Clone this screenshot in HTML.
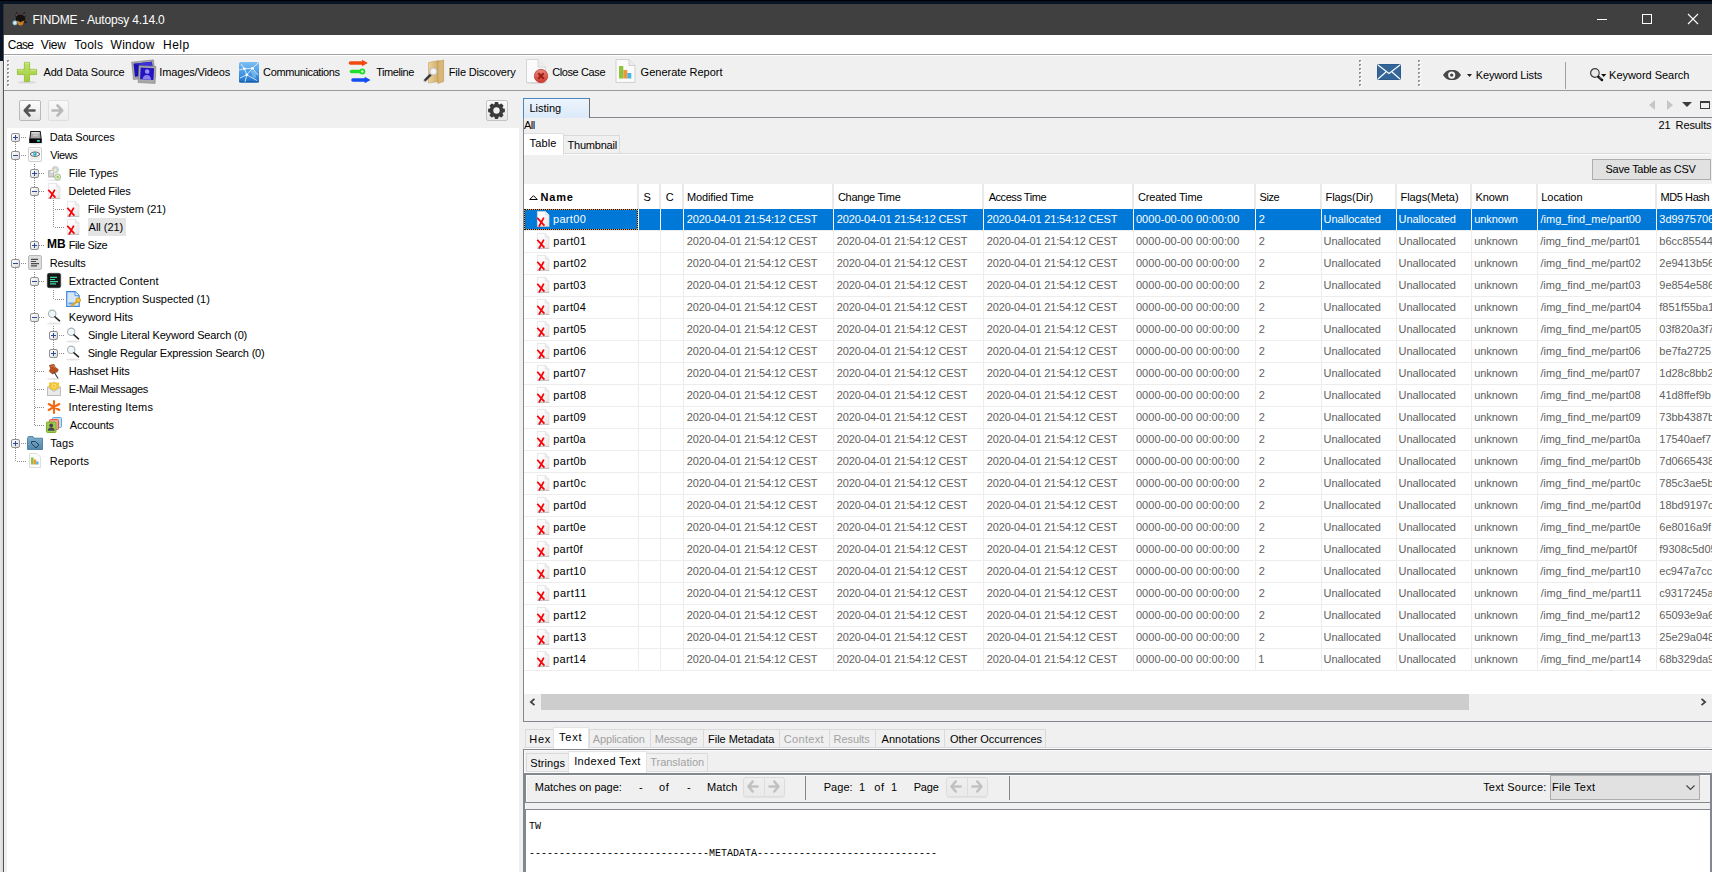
<!DOCTYPE html>
<html><head><meta charset="utf-8"><title>FINDME - Autopsy 4.14.0</title><style>
*{box-sizing:border-box;margin:0;padding:0}
html,body{width:1712px;height:872px;overflow:hidden;background:#f0f0f0}
body{position:relative;font-family:"Liberation Sans",sans-serif;font-size:11px;color:#000;line-height:14px;letter-spacing:-0.15px}
.a{position:absolute}
svg{position:absolute;overflow:visible}
.t{position:absolute;white-space:nowrap;height:14px;line-height:14px}
.g{color:#606060}
.w{color:#fff}
.d{color:#a2a2a2}
.m{font-family:"Liberation Mono",monospace;font-size:10px;letter-spacing:0}
.s{font-size:12px;letter-spacing:0}
.b{font-weight:bold}
</style></head><body>
<div class="a" style="left:0px;top:0px;width:1712px;height:4px;background:#091426"></div>
<div class="a" style="left:0px;top:0px;width:1712px;height:1px;background:#000"></div>
<div class="a" style="left:0px;top:4px;width:3px;height:57px;background:#091426"></div>
<div class="a" style="left:3px;top:4px;width:1px;height:31px;background:#2e2e2e"></div>
<div class="a" style="left:0px;top:61px;width:3px;height:811px;background:linear-gradient(90deg,#e8e8e8,#d8d8d8)"></div>
<div class="a" style="left:3px;top:35px;width:1px;height:837px;background:#555"></div>
<div class="a" style="left:4px;top:4px;width:1708px;height:31px;background:#404040"></div>
<svg style="left:12px;top:11px" width="16" height="15" viewBox="0 0 16 15"><path d="M3.300 6L4.500 .6 7 4.500z" fill="#1a1615"/><path d="M10 4.500L12.500 .6 13.700 6z" fill="#1a1615"/>
<path d="M4.300 4.800L4.800 2.300 5.900 4.300z" fill="#a87f80"/><path d="M11.100 4.300L12.200 2.300 12.700 4.800z" fill="#a87f80"/>
<ellipse cx="8.500" cy="7.800" rx="4.800" ry="4" fill="#14110f"/>
<path d="M4.800 9.500L8.500 11l3.700-1.500L11 13.500 8.500 14.700 6 13.500z" fill="#c97d22"/><path d="M7.300 9.300h2.400L8.500 11.500z" fill="#14110f"/>
<path d="M12.500 10l3 1.200-3 1z" fill="#14110f"/>
<circle cx="2.900" cy="11.900" r="2.100" fill="#c8edf5" stroke="#86b9c8" stroke-width=".7"/></svg>
<span class="t w s" style="left:32.45px;top:13px;letter-spacing:-0.17px;">FINDME - Autopsy 4.14.0</span>
<div class="a" style="left:1597px;top:19px;width:10px;height:1px;background:#fff"></div>
<div class="a" style="left:1642px;top:14px;width:10px;height:10px;border:1px solid #fff"></div>
<svg style="left:1688px;top:14px" width="10" height="10" viewBox="0 0 10 10"><path d="M0 0L10 10M10 0L0 10" stroke="#fff" stroke-width="1.1"/></svg>
<div class="a" style="left:4px;top:35px;width:1708px;height:19px;background:#fff"></div>
<div class="a" style="left:4px;top:54px;width:1708px;height:1px;background:#a0a0a0"></div>
<span class="t s" style="left:7.86px;top:38px;letter-spacing:-0.65px;">Case</span>
<span class="t s" style="left:40.83px;top:38px;letter-spacing:-0.21px;">View</span>
<span class="t s" style="left:74.16px;top:38px;letter-spacing:0.2px;">Tools</span>
<span class="t s" style="left:110.59px;top:38px;letter-spacing:0.23px;">Window</span>
<span class="t s" style="left:163.1px;top:38px;letter-spacing:0.47px;">Help</span>
<div class="a" style="left:4px;top:90px;width:1708px;height:1px;background:#9a9a9a"></div>
<div class="a" style="left:4px;top:55px;width:1708px;height:1px;background:#fff"></div>
<div class="a" style="left:4px;top:55px;width:1px;height:35px;background:#fff"></div>
<div class="a" style="left:8px;top:61px;width:2px;height:2px;background:#fff"></div>
<div class="a" style="left:7px;top:60px;width:2px;height:2px;background:#909090"></div>
<div class="a" style="left:8px;top:61px;width:1px;height:1px;background:#c4c4c4"></div>
<div class="a" style="left:8px;top:65px;width:2px;height:2px;background:#fff"></div>
<div class="a" style="left:7px;top:64px;width:2px;height:2px;background:#909090"></div>
<div class="a" style="left:8px;top:65px;width:1px;height:1px;background:#c4c4c4"></div>
<div class="a" style="left:8px;top:69px;width:2px;height:2px;background:#fff"></div>
<div class="a" style="left:7px;top:68px;width:2px;height:2px;background:#909090"></div>
<div class="a" style="left:8px;top:69px;width:1px;height:1px;background:#c4c4c4"></div>
<div class="a" style="left:8px;top:73px;width:2px;height:2px;background:#fff"></div>
<div class="a" style="left:7px;top:72px;width:2px;height:2px;background:#909090"></div>
<div class="a" style="left:8px;top:73px;width:1px;height:1px;background:#c4c4c4"></div>
<div class="a" style="left:8px;top:77px;width:2px;height:2px;background:#fff"></div>
<div class="a" style="left:7px;top:76px;width:2px;height:2px;background:#909090"></div>
<div class="a" style="left:8px;top:77px;width:1px;height:1px;background:#c4c4c4"></div>
<div class="a" style="left:8px;top:81px;width:2px;height:2px;background:#fff"></div>
<div class="a" style="left:7px;top:80px;width:2px;height:2px;background:#909090"></div>
<div class="a" style="left:8px;top:81px;width:1px;height:1px;background:#c4c4c4"></div>
<div class="a" style="left:8px;top:85px;width:2px;height:2px;background:#fff"></div>
<div class="a" style="left:7px;top:84px;width:2px;height:2px;background:#909090"></div>
<div class="a" style="left:8px;top:85px;width:1px;height:1px;background:#c4c4c4"></div>
<div class="a" style="left:1360px;top:61px;width:2px;height:2px;background:#fff"></div>
<div class="a" style="left:1359px;top:60px;width:2px;height:2px;background:#909090"></div>
<div class="a" style="left:1360px;top:61px;width:1px;height:1px;background:#c4c4c4"></div>
<div class="a" style="left:1360px;top:65px;width:2px;height:2px;background:#fff"></div>
<div class="a" style="left:1359px;top:64px;width:2px;height:2px;background:#909090"></div>
<div class="a" style="left:1360px;top:65px;width:1px;height:1px;background:#c4c4c4"></div>
<div class="a" style="left:1360px;top:69px;width:2px;height:2px;background:#fff"></div>
<div class="a" style="left:1359px;top:68px;width:2px;height:2px;background:#909090"></div>
<div class="a" style="left:1360px;top:69px;width:1px;height:1px;background:#c4c4c4"></div>
<div class="a" style="left:1360px;top:73px;width:2px;height:2px;background:#fff"></div>
<div class="a" style="left:1359px;top:72px;width:2px;height:2px;background:#909090"></div>
<div class="a" style="left:1360px;top:73px;width:1px;height:1px;background:#c4c4c4"></div>
<div class="a" style="left:1360px;top:77px;width:2px;height:2px;background:#fff"></div>
<div class="a" style="left:1359px;top:76px;width:2px;height:2px;background:#909090"></div>
<div class="a" style="left:1360px;top:77px;width:1px;height:1px;background:#c4c4c4"></div>
<div class="a" style="left:1360px;top:81px;width:2px;height:2px;background:#fff"></div>
<div class="a" style="left:1359px;top:80px;width:2px;height:2px;background:#909090"></div>
<div class="a" style="left:1360px;top:81px;width:1px;height:1px;background:#c4c4c4"></div>
<div class="a" style="left:1360px;top:85px;width:2px;height:2px;background:#fff"></div>
<div class="a" style="left:1359px;top:84px;width:2px;height:2px;background:#909090"></div>
<div class="a" style="left:1360px;top:85px;width:1px;height:1px;background:#c4c4c4"></div>
<div class="a" style="left:1419px;top:61px;width:2px;height:2px;background:#fff"></div>
<div class="a" style="left:1418px;top:60px;width:2px;height:2px;background:#909090"></div>
<div class="a" style="left:1419px;top:61px;width:1px;height:1px;background:#c4c4c4"></div>
<div class="a" style="left:1419px;top:65px;width:2px;height:2px;background:#fff"></div>
<div class="a" style="left:1418px;top:64px;width:2px;height:2px;background:#909090"></div>
<div class="a" style="left:1419px;top:65px;width:1px;height:1px;background:#c4c4c4"></div>
<div class="a" style="left:1419px;top:69px;width:2px;height:2px;background:#fff"></div>
<div class="a" style="left:1418px;top:68px;width:2px;height:2px;background:#909090"></div>
<div class="a" style="left:1419px;top:69px;width:1px;height:1px;background:#c4c4c4"></div>
<div class="a" style="left:1419px;top:73px;width:2px;height:2px;background:#fff"></div>
<div class="a" style="left:1418px;top:72px;width:2px;height:2px;background:#909090"></div>
<div class="a" style="left:1419px;top:73px;width:1px;height:1px;background:#c4c4c4"></div>
<div class="a" style="left:1419px;top:77px;width:2px;height:2px;background:#fff"></div>
<div class="a" style="left:1418px;top:76px;width:2px;height:2px;background:#909090"></div>
<div class="a" style="left:1419px;top:77px;width:1px;height:1px;background:#c4c4c4"></div>
<div class="a" style="left:1419px;top:81px;width:2px;height:2px;background:#fff"></div>
<div class="a" style="left:1418px;top:80px;width:2px;height:2px;background:#909090"></div>
<div class="a" style="left:1419px;top:81px;width:1px;height:1px;background:#c4c4c4"></div>
<div class="a" style="left:1419px;top:85px;width:2px;height:2px;background:#fff"></div>
<div class="a" style="left:1418px;top:84px;width:2px;height:2px;background:#909090"></div>
<div class="a" style="left:1419px;top:85px;width:1px;height:1px;background:#c4c4c4"></div>
<svg style="left:17px;top:62px" width="20" height="22" viewBox="0 0 20 22"><defs><linearGradient id="gp" x1="0" y1="0" x2="0" y2="1"><stop offset="0" stop-color="#c0e26c"/><stop offset="1" stop-color="#9fcb3c"/></linearGradient></defs>
<ellipse cx="10" cy="20.3" rx="9.5" ry="1.2" fill="#d8d8d8"/>
<path d="M7.400 .4h5.200v7h7v5.200h-7v7h-5.200v-7h-7v-5.200h7z" fill="url(#gp)" stroke="#8fbd30" stroke-width=".8"/><path d="M8 1.200h4M1.200 8.200h5M14 8.200h5" stroke="#d4ec98" stroke-width=".9"/></svg>
<svg style="left:132px;top:60px" width="24" height="24" viewBox="0 0 24 24"><g transform="rotate(-6 11 10)"><rect x=".5" y="1" width="22" height="17.500" fill="#a4a4a4" stroke="#7c7c7c" stroke-width=".5"/><rect x="2.300" y="2.800" width="18.400" height="13" fill="#1a10b4"/><path d="M2.300 2.800L20.700 8V2.800z" fill="#3a30d8"/></g>
<g transform="rotate(3 15 15)"><rect x="6.500" y="6" width="17" height="17" fill="#a9a9a9" stroke="#777" stroke-width=".5"/><rect x="8.300" y="7.800" width="13.400" height="11.800" fill="#2214c4"/>
<circle cx="15" cy="11.500" r="2.300" fill="#9a90ee"/><path d="M10.800 19.600c0-3.200 2-4.600 4.200-4.600s4.200 1.400 4.200 4.600z" fill="#8a80e6"/></g></svg>
<svg style="left:239px;top:62px" width="20" height="21" viewBox="0 0 20 21"><defs><linearGradient id="gc" x1="0" y1="0" x2="0" y2="1"><stop offset="0" stop-color="#7dbff3"/><stop offset=".5" stop-color="#4a9be6"/><stop offset="1" stop-color="#1f72cb"/></linearGradient></defs>
<rect x="0" y="0" width="20" height="20.500" rx="2" fill="url(#gc)"/><rect x="0" y="19" width="20" height="1.500" rx=".7" fill="#1a5ea8"/>
<path d="M12 9c2-1 4 0 5 2s0 4-1 5-3-1-3-3-2-3-1-4z" fill="#8cc4f2" opacity=".6"/>
<path d="M2 2L5.400 6.700 7.800 12.800 6 20M5.400 6.700L13.500 6.300 19 1M7.800 12.800L13.500 6.300 19 13M7.800 12.800L18 18.500M7.800 12.800L1 16M5.400 6.700L0 8" fill="none" stroke="#eaf4fd" stroke-width=".9" opacity=".9"/>
<circle cx="5.400" cy="6.700" r="1.300" fill="#fff"/><circle cx="13.500" cy="6.300" r="1.300" fill="#fff"/><circle cx="7.800" cy="12.800" r="1.400" fill="#fff"/></svg>
<svg style="left:348px;top:60px" width="23" height="23" viewBox="0 0 23 23"><g stroke-width="3.600" stroke-linecap="round" fill="none"><path d="M2.500 3H15" stroke="#f2490f"/><path d="M3.500 11.500H12" stroke="#1fe12a"/><path d="M5 20H17.500" stroke="#124cf2"/></g>
<path d="M14 -.3L19.800 3 14 6.300z" fill="#f2490f"/><path d="M16.700 16.700L22.600 20 16.700 23.300z" fill="#124cf2"/>
<circle cx="14.300" cy="11.500" r="2.100" fill="#eafbe9" stroke="#1fe12a" stroke-width="1.900"/></svg>
<svg style="left:423px;top:59px" width="22" height="25" viewBox="0 0 22 25"><defs><linearGradient id="gf" x1="0" y1="0" x2="1" y2="0"><stop offset="0" stop-color="#ecd49c"/><stop offset="1" stop-color="#cfa962"/></linearGradient></defs>
<path d="M5.500 3.500L16 1.500V22.500L5.500 24z" fill="url(#gf)" stroke="#b8955a" stroke-width=".5"/>
<path d="M14.800 2.500L20.600 1V22.500L14.800 24.500z" fill="#d9b673" stroke="#b08a4c" stroke-width=".5"/>
<path d="M8.500 15L2 21.500" stroke="#9a9a9a" stroke-width="3.400" stroke-linecap="round" opacity=".5"/><path d="M8.300 15L2.300 21" stroke="#333" stroke-width="2.200" stroke-linecap="round"/>
<circle cx="10.400" cy="12.500" r="3.500" fill="#f3f3f3" stroke="#bdbdbd" stroke-width="1.100"/></svg>
<svg style="left:525px;top:59px" width="24" height="25" viewBox="0 0 24 25"><defs><linearGradient id="gr" x1="0" y1="0" x2="0" y2="1"><stop offset="0" stop-color="#ea8a80"/><stop offset="1" stop-color="#d1392d"/></linearGradient></defs>
<ellipse cx="11" cy="24" rx="10.500" ry=".9" fill="#dcdcdc"/>
<path d="M1.500 .5h11.500l7.500 7.500V23.500H1.500z" fill="#fbfbfb" stroke="#cfcfcf" stroke-width=".8"/><path d="M13 .5v7.500h7.500" fill="#ededed" stroke="#cfcfcf" stroke-width=".8"/>
<circle cx="16" cy="17" r="6.700" fill="url(#gr)" stroke="#b8352b" stroke-width=".7"/><path d="M13.300 14.300l5.400 5.400M18.700 14.300l-5.400 5.400" stroke="#9c1d15" stroke-width="2"/></svg>
<svg style="left:615px;top:59px" width="21" height="25" viewBox="0 0 21 25"><path d="M1 .5h13l6 6V23.500H1z" fill="#fafafa" stroke="#c8c8c8" stroke-width=".8"/><path d="M14 .5v6h6" fill="#ececec" stroke="#c8c8c8" stroke-width=".8"/>
<rect x="4" y="7" width="4.300" height="12.500" fill="#8cc63f"/><rect x="8.300" y="11" width="4" height="8.500" fill="#f0973a"/><rect x="12.300" y="14" width="4" height="5.500" fill="#4ab4e6"/></svg>
<span class="t " style="left:43.55px;top:65px;letter-spacing:-0.19px;">Add Data Source</span>
<span class="t " style="left:159.21px;top:65px;letter-spacing:-0.13px;">Images/Videos</span>
<span class="t " style="left:263.11px;top:65px;letter-spacing:-0.38px;">Communications</span>
<span class="t " style="left:376.16px;top:65px;letter-spacing:-0.43px;">Timeline</span>
<span class="t " style="left:448.81px;top:65px;letter-spacing:-0.17px;">File Discovery</span>
<span class="t " style="left:552.14px;top:65px;letter-spacing:-0.38px;">Close Case</span>
<span class="t " style="left:640.61px;top:65px;letter-spacing:0px;">Generate Report</span>
<svg style="left:1377px;top:64px" width="24" height="16" viewBox="0 0 24 16"><rect x=".5" y=".5" width="23" height="15" rx="1" fill="#336699" stroke="#2b5b8c"/><path d="M1 1l11 8.500L23 1M1 15l8-7M23 15l-8-7" fill="none" stroke="#fff" stroke-width="1.100"/></svg>
<svg style="left:1443px;top:70px" width="18" height="10" viewBox="0 0 18 10"><path d="M0 5C3 .3 6 0 9 0s6 .3 9 5c-3 4.700-6 5-9 5s-6-.3-9-5z" fill="#484848"/><circle cx="8.700" cy="5.100" r="3.600" fill="#f4f4f4"/><circle cx="8.700" cy="5.100" r="1.700" fill="#484848"/></svg>
<svg style="left:1467px;top:74px" width="5" height="3" viewBox="0 0 5 3"><path d="M0 0h5L2.500 3z" fill="#222"/></svg>
<span class="t " style="left:1475.86px;top:68px;letter-spacing:-0.17px;">Keyword Lists</span>
<div class="a" style="left:1565px;top:62px;width:1px;height:27px;background:#a0a0a0"></div>
<svg style="left:1590px;top:68px" width="17" height="14" viewBox="0 0 17 14"><circle cx="4.900" cy="5" r="4.300" fill="#e9e9e9" stroke="#3e3e3e" stroke-width="1.200"/><path d="M8.400 8.900L12 12" stroke="#111" stroke-width="2.500" stroke-linecap="round"/><path d="M9.200 10.300l1.600-1.600M10.300 11.300l1.600-1.600" stroke="#eee" stroke-width=".5"/><path d="M11.100 5.900h5.200l-2.600 3.100z" fill="#111"/></svg>
<span class="t " style="left:1609.1px;top:68px;letter-spacing:-0.03px;">Keyword Search</span>
<div class="a" style="left:19px;top:100px;width:22px;height:21px;border:1px solid #b9b9b9;border-radius:2px;background:linear-gradient(#fdfdfd,#e4e4e4)"></div>
<div class="a" style="left:48px;top:100px;width:21px;height:21px;border:1px solid #dedede;border-radius:2px;background:linear-gradient(#f9f9f9,#ededed)"></div>
<svg style="left:23px;top:104px" width="14" height="13" viewBox="0 0 14 13"><path d="M6.500 1.500L1.800 6.500 6.500 11.500M2.500 6.500H11.500" fill="none" stroke="#565656" stroke-width="2.600" stroke-linecap="round" stroke-linejoin="round"/></svg>
<svg style="left:51px;top:104px" width="14" height="13" viewBox="0 0 14 13"><path d="M6.500 1.500L11.200 6.500 6.500 11.500M10.500 6.500H1.500" fill="none" stroke="#b9b9b9" stroke-width="2.600" stroke-linecap="round" stroke-linejoin="round"/></svg>
<div class="a" style="left:486px;top:100px;width:22px;height:21px;border:1px solid #c4c4c4;border-radius:2px;background:linear-gradient(#fbfbfb,#e6e6e6)"></div>
<svg style="left:488px;top:102px" width="17" height="17" viewBox="0 0 17 17"><g transform="translate(8.500 8.500)"><rect x="-1.900" y="-8.400" width="3.800" height="4.500" rx=".8" fill="#3a3a3a" transform="rotate(0)"/><rect x="-1.900" y="-8.400" width="3.800" height="4.500" rx=".8" fill="#3a3a3a" transform="rotate(45)"/><rect x="-1.900" y="-8.400" width="3.800" height="4.500" rx=".8" fill="#3a3a3a" transform="rotate(90)"/><rect x="-1.900" y="-8.400" width="3.800" height="4.500" rx=".8" fill="#3a3a3a" transform="rotate(135)"/><rect x="-1.900" y="-8.400" width="3.800" height="4.500" rx=".8" fill="#3a3a3a" transform="rotate(180)"/><rect x="-1.900" y="-8.400" width="3.800" height="4.500" rx=".8" fill="#3a3a3a" transform="rotate(225)"/><rect x="-1.900" y="-8.400" width="3.800" height="4.500" rx=".8" fill="#3a3a3a" transform="rotate(270)"/><rect x="-1.900" y="-8.400" width="3.800" height="4.500" rx=".8" fill="#3a3a3a" transform="rotate(315)"/><circle r="5" fill="none" stroke="#3a3a3a" stroke-width="3.600"/></g></svg>
<div class="a" style="left:7px;top:128px;width:512px;height:744px;background:#fff"></div>
<svg width="0" height="0" style="left:0;top:0"><defs><linearGradient id="gd" x1="0" y1="0" x2="1" y2="1"><stop offset=".3" stop-color="#fdfdfd"/><stop offset="1" stop-color="#e4e4e4"/></linearGradient></defs></svg>
<div class="a" style="left:15px;top:142px;width:1px;height:319px;background:repeating-linear-gradient(#8c8c8c 0 1px,transparent 1px 2px)"></div>
<div class="a" style="left:17px;top:461px;width:9px;height:1px;background:repeating-linear-gradient(90deg,#8c8c8c 0 1px,transparent 1px 2px)"></div>
<div class="a" style="left:34px;top:164px;width:1px;height:77px;background:repeating-linear-gradient(#8c8c8c 0 1px,transparent 1px 2px)"></div>
<div class="a" style="left:34px;top:272px;width:1px;height:153px;background:repeating-linear-gradient(#8c8c8c 0 1px,transparent 1px 2px)"></div>
<div class="a" style="left:35px;top:371px;width:9px;height:1px;background:repeating-linear-gradient(90deg,#8c8c8c 0 1px,transparent 1px 2px)"></div>
<div class="a" style="left:35px;top:389px;width:9px;height:1px;background:repeating-linear-gradient(90deg,#8c8c8c 0 1px,transparent 1px 2px)"></div>
<div class="a" style="left:35px;top:407px;width:9px;height:1px;background:repeating-linear-gradient(90deg,#8c8c8c 0 1px,transparent 1px 2px)"></div>
<div class="a" style="left:35px;top:425px;width:9px;height:1px;background:repeating-linear-gradient(90deg,#8c8c8c 0 1px,transparent 1px 2px)"></div>
<div class="a" style="left:53px;top:200px;width:1px;height:27px;background:repeating-linear-gradient(#8c8c8c 0 1px,transparent 1px 2px)"></div>
<div class="a" style="left:55px;top:209px;width:9px;height:1px;background:repeating-linear-gradient(90deg,#8c8c8c 0 1px,transparent 1px 2px)"></div>
<div class="a" style="left:55px;top:227px;width:9px;height:1px;background:repeating-linear-gradient(90deg,#8c8c8c 0 1px,transparent 1px 2px)"></div>
<div class="a" style="left:53px;top:290px;width:1px;height:9px;background:repeating-linear-gradient(#8c8c8c 0 1px,transparent 1px 2px)"></div>
<div class="a" style="left:55px;top:299px;width:9px;height:1px;background:repeating-linear-gradient(90deg,#8c8c8c 0 1px,transparent 1px 2px)"></div>
<div class="a" style="left:53px;top:326px;width:1px;height:27px;background:repeating-linear-gradient(#8c8c8c 0 1px,transparent 1px 2px)"></div>
<div class="a" style="left:21px;top:137px;width:5px;height:1px;background:repeating-linear-gradient(90deg,#8c8c8c 0 1px,transparent 1px 2px)"></div>
<div class="a" style="left:11px;top:133px;width:9px;height:9px;border:1px solid #919191;border-radius:2px;background:linear-gradient(135deg,#fff,#dcdcdc)"></div>
<div class="a" style="left:13px;top:137px;width:5px;height:1px;background:#2c4a9a"></div>
<div class="a" style="left:15px;top:135px;width:1px;height:5px;background:#2c4a9a"></div>
<svg style="left:29px;top:131px" width="13" height="13" viewBox="0 0 13 13"><ellipse cx="6.500" cy="12.700" rx="7.200" ry=".8" fill="#e0e0e0"/><path d="M1.300 0h10.400l1 8H.3z" fill="#1d1d1d"/><path d="M2.200 1h8.600l.8 6.500H1.400z" fill="#a6a6a6"/><rect x="2.600" y="1.200" width="7.800" height="1.300" fill="#e9e9e9"/><rect x="3.800" y="3.600" width="5.400" height="1.600" rx=".5" fill="#c9c9c9"/><rect x=".2" y="7.800" width="12.600" height="4.200" rx=".5" fill="#050505"/><rect x="7.800" y="9" width="3.200" height="1.700" rx=".8" fill="#2fd0d6"/></svg>
<span class="t " style="left:49.67px;top:130px;letter-spacing:-0.15px;">Data Sources</span>
<div class="a" style="left:21px;top:155px;width:5px;height:1px;background:repeating-linear-gradient(90deg,#8c8c8c 0 1px,transparent 1px 2px)"></div>
<div class="a" style="left:11px;top:151px;width:9px;height:9px;border:1px solid #919191;border-radius:2px;background:linear-gradient(135deg,#fff,#dcdcdc)"></div>
<div class="a" style="left:13px;top:155px;width:5px;height:1px;background:#2c4a9a"></div>
<svg style="left:28px;top:147px" width="14" height="15" viewBox="0 0 14 15"><rect x=".5" y=".5" width="13" height="14" rx="1.500" fill="#fdfdfd" stroke="#cdcdcd"/><rect x="2.200" y="2.200" width="9.600" height="10.600" fill="#ececec"/><path d="M2 7.200C4.300 4.300 9.700 4.300 12 7.200 9.700 10.100 4.300 10.100 2 7.200z" fill="#f4f4f4" stroke="#4a4a4a" stroke-width=".9"/><circle cx="6.900" cy="7" r="1.800" fill="#1fa6cf"/><circle cx="6.600" cy="6.600" r=".6" fill="#9fe3f5"/></svg>
<span class="t " style="left:50.34px;top:148px;letter-spacing:-0.44px;">Views</span>
<div class="a" style="left:39px;top:173px;width:5px;height:1px;background:repeating-linear-gradient(90deg,#8c8c8c 0 1px,transparent 1px 2px)"></div>
<div class="a" style="left:30px;top:169px;width:9px;height:9px;border:1px solid #919191;border-radius:2px;background:linear-gradient(135deg,#fff,#dcdcdc)"></div>
<div class="a" style="left:32px;top:173px;width:5px;height:1px;background:#2c4a9a"></div>
<div class="a" style="left:34px;top:171px;width:1px;height:5px;background:#2c4a9a"></div>
<svg style="left:48px;top:165.6px" width="14" height="15" viewBox="0 0 14 15"><ellipse cx="6.500" cy="14.200" rx="7.800" ry=".8" fill="#e6e6e6"/><circle cx="7.300" cy="3.700" r="3.200" fill="#f0ecf4" stroke="#c2c2c8" stroke-width=".9"/><path d="M7.300 .9a2.800 2.800 0 0 1 2.800 2.800h-1.600a1.200 1.200 0 0 0-1.200-1.200z" fill="#a9e0e4"/><path d="M4.500 3.700a2.800 2.800 0 0 1 2.800-2.800v1.600a1.200 1.200 0 0 0-1.200 1.200z" fill="#f0c4a8"/><path d="M10.100 3.700a2.800 2.800 0 0 1-2.800 2.800v-1.600a1.200 1.200 0 0 0 1.200-1.200z" fill="#bfe6a0"/><rect x=".7" y="4.600" width="5" height="6.400" fill="#d2d2d2" stroke="#a9a9a9" stroke-width=".8"/><rect x="2.700" y="4.600" width="3" height="2" fill="#f2f2f2"/><circle cx="9.600" cy="11" r="3.100" fill="#d2efb0" stroke="#b3b3b3" stroke-width=".9"/><circle cx="9.600" cy="11" r="1" fill="#8fbf50"/></svg>
<span class="t " style="left:68.67px;top:166px;letter-spacing:-0.06px;">File Types</span>
<div class="a" style="left:39px;top:191px;width:5px;height:1px;background:repeating-linear-gradient(90deg,#8c8c8c 0 1px,transparent 1px 2px)"></div>
<div class="a" style="left:30px;top:187px;width:9px;height:9px;border:1px solid #919191;border-radius:2px;background:linear-gradient(135deg,#fff,#dcdcdc)"></div>
<div class="a" style="left:32px;top:191px;width:5px;height:1px;background:#2c4a9a"></div>
<svg style="left:48px;top:183px" width="13" height="16" viewBox="0 0 13 16"><path d="M.4 .4h8l3.600 3.600V15.500H.4z" fill="url(#gd)" stroke="#dcdcdc" stroke-width=".7"/><path d="M8.400 .4v3.600H12" fill="#f1f1f1" stroke="#d6d6d6" stroke-width=".6"/><path d="M.2 15.400H12.200" stroke="#b9b9b9" stroke-width=".9"/><path d="M.3 6.900L7.400 14.600M6.800 6.600L2 15.500" stroke="#fb0007" stroke-width="1.700" fill="none"/></svg>
<span class="t " style="left:68.62px;top:184px;letter-spacing:-0.17px;">Deleted Files</span>
<svg style="left:67px;top:201px" width="13" height="16" viewBox="0 0 13 16"><path d="M.4 .4h8l3.600 3.600V15.500H.4z" fill="url(#gd)" stroke="#dcdcdc" stroke-width=".7"/><path d="M8.400 .4v3.600H12" fill="#f1f1f1" stroke="#d6d6d6" stroke-width=".6"/><path d="M.2 15.400H12.200" stroke="#b9b9b9" stroke-width=".9"/><path d="M.3 6.900L7.400 14.600M6.800 6.600L2 15.500" stroke="#fb0007" stroke-width="1.700" fill="none"/></svg>
<span class="t " style="left:87.7px;top:202px;letter-spacing:-0.12px;">File System (21)</span>
<div class="a" style="left:88px;top:218px;width:38px;height:18px;background:#e4e4e4"></div>
<svg style="left:67px;top:219px" width="13" height="16" viewBox="0 0 13 16"><path d="M.4 .4h8l3.600 3.600V15.500H.4z" fill="url(#gd)" stroke="#dcdcdc" stroke-width=".7"/><path d="M8.400 .4v3.600H12" fill="#f1f1f1" stroke="#d6d6d6" stroke-width=".6"/><path d="M.2 15.400H12.200" stroke="#b9b9b9" stroke-width=".9"/><path d="M.3 6.900L7.400 14.600M6.800 6.600L2 15.500" stroke="#fb0007" stroke-width="1.700" fill="none"/></svg>
<span class="t " style="left:88.57px;top:220px;letter-spacing:-0.02px;">All (21)</span>
<div class="a" style="left:39px;top:245px;width:5px;height:1px;background:repeating-linear-gradient(90deg,#8c8c8c 0 1px,transparent 1px 2px)"></div>
<div class="a" style="left:30px;top:241px;width:9px;height:9px;border:1px solid #919191;border-radius:2px;background:linear-gradient(135deg,#fff,#dcdcdc)"></div>
<div class="a" style="left:32px;top:245px;width:5px;height:1px;background:#2c4a9a"></div>
<div class="a" style="left:34px;top:243px;width:1px;height:5px;background:#2c4a9a"></div>
<span class="t " style="left:47px;top:237px;font-weight:bold;font-size:12px;letter-spacing:0">MB</span>
<span class="t " style="left:68.67px;top:238px;letter-spacing:-0.39px;">File Size</span>
<div class="a" style="left:21px;top:263px;width:5px;height:1px;background:repeating-linear-gradient(90deg,#8c8c8c 0 1px,transparent 1px 2px)"></div>
<div class="a" style="left:11px;top:259px;width:9px;height:9px;border:1px solid #919191;border-radius:2px;background:linear-gradient(135deg,#fff,#dcdcdc)"></div>
<div class="a" style="left:13px;top:263px;width:5px;height:1px;background:#2c4a9a"></div>
<svg style="left:28px;top:255px" width="14" height="15" viewBox="0 0 14 15"><rect x=".5" y=".5" width="13" height="14" rx="1.500" fill="#dedede" stroke="#b9b9b9"/><path d="M3 4.300h7M3 6.500h5M3 8.700h8M3 10.900h6" stroke="#4b4b4b" stroke-width="1.200"/></svg>
<span class="t " style="left:49.67px;top:256px;letter-spacing:-0.11px;">Results</span>
<div class="a" style="left:39px;top:281px;width:5px;height:1px;background:repeating-linear-gradient(90deg,#8c8c8c 0 1px,transparent 1px 2px)"></div>
<div class="a" style="left:30px;top:277px;width:9px;height:9px;border:1px solid #919191;border-radius:2px;background:linear-gradient(135deg,#fff,#dcdcdc)"></div>
<div class="a" style="left:32px;top:281px;width:5px;height:1px;background:#2c4a9a"></div>
<svg style="left:47px;top:273px" width="14" height="15" viewBox="0 0 14 15"><rect x=".3" y=".3" width="13.400" height="14.400" rx="1.800" fill="#161616" stroke="#3a3a3a" stroke-width=".6"/><path d="M3 4.300h7M3 6.500h5M3 8.700h8M3 10.900h6" stroke="#3fd6a0" stroke-width="1.200"/></svg>
<span class="t " style="left:68.67px;top:274px;letter-spacing:0.11px;">Extracted Content</span>
<svg style="left:66px;top:291px" width="15" height="16" viewBox="0 0 15 16"><path d="M.7 .7h8.500l4 4V15.300H.7z" fill="#d4e6fa" stroke="#3f87d9" stroke-width="1.200"/><path d="M9 .7v4h4" fill="#eaf3fd" stroke="#3f87d9" stroke-width=".9"/><rect x="2.500" y="11.500" width="6" height="2" fill="#5fa3e6"/><path d="M6 14.500L11 10.500" stroke="#e0a520" stroke-width="2.200" stroke-linecap="round"/><circle cx="12.200" cy="9.200" r="2.300" fill="#f2c445" stroke="#c98f12" stroke-width=".8"/></svg>
<span class="t " style="left:87.7px;top:292px;letter-spacing:-0.06px;">Encryption Suspected (1)</span>
<div class="a" style="left:39px;top:317px;width:5px;height:1px;background:repeating-linear-gradient(90deg,#8c8c8c 0 1px,transparent 1px 2px)"></div>
<div class="a" style="left:30px;top:313px;width:9px;height:9px;border:1px solid #919191;border-radius:2px;background:linear-gradient(135deg,#fff,#dcdcdc)"></div>
<div class="a" style="left:32px;top:317px;width:5px;height:1px;background:#2c4a9a"></div>
<svg style="left:47.3px;top:309.3px" width="14" height="16" viewBox="0 0 14 16"><ellipse cx="7" cy="14.500" rx="7" ry="1" fill="#e4e4e4"/><circle cx="5.200" cy="4.800" r="3.700" fill="#eef7fa" stroke="#a9b3b6" stroke-width="1.100"/><path d="M8 7.800L12.500 11.800" stroke="#2b2b2b" stroke-width="1.600" stroke-linecap="round"/></svg>
<span class="t " style="left:68.67px;top:310px;letter-spacing:-0.05px;">Keyword Hits</span>
<div class="a" style="left:59px;top:335px;width:5px;height:1px;background:repeating-linear-gradient(90deg,#8c8c8c 0 1px,transparent 1px 2px)"></div>
<div class="a" style="left:49px;top:331px;width:9px;height:9px;border:1px solid #919191;border-radius:2px;background:linear-gradient(135deg,#fff,#dcdcdc)"></div>
<div class="a" style="left:51px;top:335px;width:5px;height:1px;background:#2c4a9a"></div>
<div class="a" style="left:53px;top:333px;width:1px;height:5px;background:#2c4a9a"></div>
<svg style="left:66.3px;top:327.3px" width="14" height="16" viewBox="0 0 14 16"><ellipse cx="7" cy="14.500" rx="7" ry="1" fill="#e4e4e4"/><circle cx="5.200" cy="4.800" r="3.700" fill="#eef7fa" stroke="#a9b3b6" stroke-width="1.100"/><path d="M8 7.800L12.500 11.800" stroke="#2b2b2b" stroke-width="1.600" stroke-linecap="round"/></svg>
<span class="t " style="left:87.9px;top:328px;letter-spacing:-0.14px;">Single Literal Keyword Search (0)</span>
<div class="a" style="left:59px;top:353px;width:5px;height:1px;background:repeating-linear-gradient(90deg,#8c8c8c 0 1px,transparent 1px 2px)"></div>
<div class="a" style="left:49px;top:349px;width:9px;height:9px;border:1px solid #919191;border-radius:2px;background:linear-gradient(135deg,#fff,#dcdcdc)"></div>
<div class="a" style="left:51px;top:353px;width:5px;height:1px;background:#2c4a9a"></div>
<div class="a" style="left:53px;top:351px;width:1px;height:5px;background:#2c4a9a"></div>
<svg style="left:66.3px;top:345.3px" width="14" height="16" viewBox="0 0 14 16"><ellipse cx="7" cy="14.500" rx="7" ry="1" fill="#e4e4e4"/><circle cx="5.200" cy="4.800" r="3.700" fill="#eef7fa" stroke="#a9b3b6" stroke-width="1.100"/><path d="M8 7.800L12.500 11.800" stroke="#2b2b2b" stroke-width="1.600" stroke-linecap="round"/></svg>
<span class="t " style="left:87.66px;top:346px;letter-spacing:-0.2px;">Single Regular Expression Search (0)</span>
<svg style="left:46.5px;top:363.5px" width="14" height="16" viewBox="0 0 14 16"><ellipse cx="6.500" cy="14.800" rx="7" ry=".9" fill="#e4e4e4"/><path d="M2.500 1.300L7 .3l1.300 3 3 2.200-1 2.300-5 2.200-3-2.800 1.200-2.700z" fill="#b5511f" stroke="#8a3a12" stroke-width=".6"/><path d="M4 2.500l3-.8 .8 2.300" fill="none" stroke="#d98a5a" stroke-width=".8"/><path d="M7.500 8.800L10.800 14" stroke="#3a3a3a" stroke-width="1.100" stroke-linecap="round"/></svg>
<span class="t " style="left:68.67px;top:364px;letter-spacing:-0.12px;">Hashset Hits</span>
<svg style="left:47px;top:381px" width="14" height="15" viewBox="0 0 14 15"><path d="M.5 6L7 .8 13.500 6V14.500H.5z" fill="#ededed" stroke="#bdbdbd" stroke-width=".8"/><rect x="2" y="1.500" width="10" height="8" fill="#f4c531"/><circle cx="7" cy="5" r="2" fill="none" stroke="#f9e08a" stroke-width="1"/><path d="M.5 6L7 10.500 13.500 6V14.500H.5z" fill="#e9e9e9" stroke="#b5b5b5" stroke-width=".8"/></svg>
<span class="t " style="left:68.67px;top:382px;letter-spacing:-0.34px;">E-Mail Messages</span>
<svg style="left:47.2px;top:399.8px" width="14" height="14" viewBox="0 0 14 14"><path d="M7 1V13M1.700 4L12.300 10M12.300 4L1.700 10" stroke="#f26a16" stroke-width="2.100" stroke-linecap="round"/></svg>
<span class="t " style="left:68.42px;top:400px;letter-spacing:0.2px;">Interesting Items</span>
<svg style="left:46px;top:417px" width="16" height="16" viewBox="0 0 16 16"><rect x="6.500" y=".5" width="9" height="10" rx="1" fill="#bfe1f6" stroke="#5ea8d8"/><rect x="3.500" y="2.500" width="9" height="10" rx="1" fill="#f8a090" stroke="#e2523e"/><rect x=".5" y="5" width="9.500" height="10.500" rx="1" fill="#9ccb4a" stroke="#7fae30"/><circle cx="5.200" cy="8.500" r="1.900" fill="#4a4458"/><path d="M1.800 13.800c0-2.600 1.500-3.300 3.400-3.300s3.400 .7 3.400 3.300z" fill="#4a4458"/></svg>
<span class="t " style="left:69.72px;top:418px;letter-spacing:-0.12px;">Accounts</span>
<div class="a" style="left:21px;top:443px;width:5px;height:1px;background:repeating-linear-gradient(90deg,#8c8c8c 0 1px,transparent 1px 2px)"></div>
<div class="a" style="left:11px;top:439px;width:9px;height:9px;border:1px solid #919191;border-radius:2px;background:linear-gradient(135deg,#fff,#dcdcdc)"></div>
<div class="a" style="left:13px;top:443px;width:5px;height:1px;background:#2c4a9a"></div>
<div class="a" style="left:15px;top:441px;width:1px;height:5px;background:#2c4a9a"></div>
<svg style="left:27px;top:436px" width="16" height="14" viewBox="0 0 16 14"><defs><linearGradient id="gt" x1="0" y1="0" x2="0" y2="1"><stop offset="0" stop-color="#7fb0cf"/><stop offset="1" stop-color="#4f86ad"/></linearGradient></defs><path d="M.5 2.200l1-1.700h4.500l1 1.700h8.500V13.500H.5z" fill="url(#gt)" stroke="#3f7096" stroke-width=".8"/><path d="M4.500 5.500h4l3.500 3.500-3 3-4.500-4.500z" fill="none" stroke="#2c3e50" stroke-width="1"/></svg>
<span class="t " style="left:50.16px;top:436px;letter-spacing:0.12px;">Tags</span>
<svg style="left:29px;top:453px" width="12" height="15" viewBox="0 0 12 15"><path d="M.5 .5h7.500l3.500 3.500V14.500H.5z" fill="#fbfbfb" stroke="#d6d6d6" stroke-width=".8"/><rect x="2" y="4.500" width="2.600" height="7" fill="#8cc63f"/><rect x="4.600" y="6.500" width="2.600" height="5" fill="#f0973a"/><rect x="7.200" y="8.500" width="2.300" height="3" fill="#4ab4e6"/></svg>
<span class="t " style="left:49.67px;top:454px;letter-spacing:0.14px;">Reports</span>
<div class="a" style="left:523px;top:98px;width:67px;height:20px;background:linear-gradient(#edf4fc,#dbe9f9);border:1px solid #4a86c2;border-right-color:#6b6b6b;border-bottom:none"></div>
<div class="a" style="left:590px;top:117px;width:1122px;height:1px;background:#828790"></div>
<div class="a" style="left:523px;top:118px;width:1px;height:603px;background:#828790"></div>
<span class="t " style="left:529.48px;top:101px;letter-spacing:-0.02px;">Listing</span>
<span class="t " style="left:524px;top:118px;letter-spacing:-0.5px;">All</span>
<span class="t " style="left:1658.48px;top:118px;letter-spacing:-0.15px;">21</span>
<span class="t " style="left:1675.57px;top:118px;letter-spacing:-0.11px;">Results</span>
<svg style="left:1649px;top:100px" width="6" height="10" viewBox="0 0 6 10"><path d="M6 0V10L0 5z" fill="#c6c6c6"/></svg>
<svg style="left:1667px;top:100px" width="6" height="10" viewBox="0 0 6 10"><path d="M0 0V10L6 5z" fill="#c6c6c6"/></svg>
<svg style="left:1682px;top:102px" width="10" height="5" viewBox="0 0 10 5"><path d="M0 0H10L5 5z" fill="#3c3c3c"/></svg>
<div class="a" style="left:1700px;top:101px;width:10px;height:8px;border:1px solid #3c3c3c;border-top-width:2px"></div>
<div class="a" style="left:524px;top:133px;width:40px;height:22px;background:#fff;border:1px solid #e0e0e0;border-bottom:none;border-left:none"></div>
<div class="a" style="left:563px;top:135px;width:57px;height:19px;border:1px solid #dadada"></div>
<div class="a" style="left:620px;top:153px;width:1090px;height:1px;background:#dadada"></div>
<div class="a" style="left:564px;top:154px;width:1146px;height:1px;background:#fcfcfc"></div>
<span class="t " style="left:529.52px;top:136px;letter-spacing:0.16px;">Table</span>
<span class="t " style="left:567.52px;top:138px;letter-spacing:-0.22px;">Thumbnail</span>
<div class="a" style="left:1592px;top:159px;width:119px;height:21px;background:#e1e1e1;border:1px solid #adadad"></div>
<span class="t " style="left:1605.55px;top:162px;letter-spacing:-0.27px;">Save Table as CSV</span>
<div class="a" style="left:524px;top:184px;width:1188px;height:510px;background:#fff"></div>
<svg style="left:529px;top:195px" width="9" height="5" viewBox="0 0 9 5"><path d="M.7 4.500L4.500 .7 8.300 4.500z" fill="none" stroke="#000" stroke-width="1"/></svg>
<span class="t b" style="left:540.59px;top:190px;letter-spacing:0.8px;">Name</span>
<div class="a" style="left:637px;top:184px;width:2px;height:25px;background:#e9e9e9"></div>
<span class="t " style="left:643.6px;top:190px;letter-spacing:-0.15px;">S</span>
<div class="a" style="left:659px;top:184px;width:2px;height:25px;background:#e9e9e9"></div>
<span class="t " style="left:665.7px;top:190px;letter-spacing:-0.15px;">C</span>
<div class="a" style="left:682px;top:184px;width:2px;height:25px;background:#e9e9e9"></div>
<span class="t " style="left:687.1px;top:190px;letter-spacing:-0.16px;">Modified Time</span>
<div class="a" style="left:832px;top:184px;width:2px;height:25px;background:#e9e9e9"></div>
<span class="t " style="left:837.94px;top:190px;letter-spacing:-0.26px;">Change Time</span>
<div class="a" style="left:982px;top:184px;width:2px;height:25px;background:#e9e9e9"></div>
<span class="t " style="left:988.64px;top:190px;letter-spacing:-0.44px;">Access Time</span>
<div class="a" style="left:1132px;top:184px;width:2px;height:25px;background:#e9e9e9"></div>
<span class="t " style="left:1137.89px;top:190px;letter-spacing:-0.12px;">Created Time</span>
<div class="a" style="left:1254px;top:184px;width:2px;height:25px;background:#e9e9e9"></div>
<span class="t " style="left:1259.61px;top:190px;letter-spacing:-0.46px;">Size</span>
<div class="a" style="left:1320px;top:184px;width:2px;height:25px;background:#e9e9e9"></div>
<span class="t " style="left:1325.5px;top:190px;letter-spacing:-0.07px;">Flags(Dir)</span>
<div class="a" style="left:1395px;top:184px;width:2px;height:25px;background:#e9e9e9"></div>
<span class="t " style="left:1400.5px;top:190px;letter-spacing:-0.06px;">Flags(Meta)</span>
<div class="a" style="left:1470px;top:184px;width:2px;height:25px;background:#e9e9e9"></div>
<span class="t " style="left:1475.62px;top:190px;letter-spacing:-0.15px;">Known</span>
<div class="a" style="left:1536px;top:184px;width:2px;height:25px;background:#e9e9e9"></div>
<span class="t " style="left:1541.27px;top:190px;letter-spacing:-0.05px;">Location</span>
<div class="a" style="left:1655px;top:184px;width:2px;height:25px;background:#e9e9e9"></div>
<span class="t " style="left:1660.46px;top:190px;letter-spacing:-0.41px;">MD5 Hash</span>
<div class="a" style="left:524px;top:209px;width:1188px;height:21px;background:#0078d7"></div>
<div class="a" style="left:524px;top:209px;width:114px;height:21px;border:1px solid #f2a23c"></div>
<div class="a" style="left:524px;top:209px;width:114px;height:21px;border:1px dotted #111"></div>
<div class="a" style="left:524px;top:230px;width:1188px;height:1px;background:#ededed"></div>
<svg style="left:537px;top:211px" width="13" height="16" viewBox="0 0 13 16"><path d="M.4 .4h8l3.600 3.600V15.500H.4z" fill="url(#gd)" stroke="#dcdcdc" stroke-width=".7"/><path d="M8.400 .4v3.600H12" fill="#f1f1f1" stroke="#d6d6d6" stroke-width=".6"/><path d="M.2 15.400H12.200" stroke="#b9b9b9" stroke-width=".9"/><path d="M.3 6.900L7.400 14.600M6.800 6.600L2 15.500" stroke="#fb0007" stroke-width="1.700" fill="none"/></svg>
<span class="t w" style="left:552.94px;top:212px;letter-spacing:0.34px;">part00</span>
<span class="t w" style="left:686.8px;top:212px;letter-spacing:-0.17px;">2020-04-01 21:54:12 CEST</span>
<span class="t w" style="left:836.8px;top:212px;letter-spacing:-0.17px;">2020-04-01 21:54:12 CEST</span>
<span class="t w" style="left:986.8px;top:212px;letter-spacing:-0.17px;">2020-04-01 21:54:12 CEST</span>
<span class="t w" style="left:1135.93px;top:212px;letter-spacing:0.07px;">0000-00-00 00:00:00</span>
<span class="t w" style="left:1258.78px;top:212px;letter-spacing:-0.15px;">2</span>
<span class="t w" style="left:1323.55px;top:212px;letter-spacing:-0.07px;">Unallocated</span>
<span class="t w" style="left:1398.55px;top:212px;letter-spacing:-0.07px;">Unallocated</span>
<span class="t w" style="left:1474.26px;top:212px;letter-spacing:-0.07px;">unknown</span>
<span class="t w" style="left:1540.53px;top:212px;letter-spacing:0.01px;">/img_find_me/part00</span>
<span class="t w" style="left:1659.3px;top:212px;letter-spacing:-0.02px;">3d9975706</span>
<div class="a" style="left:524px;top:252px;width:1188px;height:1px;background:#ededed"></div>
<svg style="left:537px;top:233px" width="13" height="16" viewBox="0 0 13 16"><path d="M.4 .4h8l3.600 3.600V15.500H.4z" fill="url(#gd)" stroke="#dcdcdc" stroke-width=".7"/><path d="M8.400 .4v3.600H12" fill="#f1f1f1" stroke="#d6d6d6" stroke-width=".6"/><path d="M.2 15.400H12.200" stroke="#b9b9b9" stroke-width=".9"/><path d="M.3 6.900L7.400 14.600M6.800 6.600L2 15.500" stroke="#fb0007" stroke-width="1.700" fill="none"/></svg>
<span class="t " style="left:553.18px;top:234px;letter-spacing:0.37px;">part01</span>
<span class="t g" style="left:686.8px;top:234px;letter-spacing:-0.17px;">2020-04-01 21:54:12 CEST</span>
<span class="t g" style="left:836.8px;top:234px;letter-spacing:-0.17px;">2020-04-01 21:54:12 CEST</span>
<span class="t g" style="left:986.8px;top:234px;letter-spacing:-0.17px;">2020-04-01 21:54:12 CEST</span>
<span class="t g" style="left:1135.93px;top:234px;letter-spacing:0.07px;">0000-00-00 00:00:00</span>
<span class="t g" style="left:1258.78px;top:234px;letter-spacing:-0.15px;">2</span>
<span class="t g" style="left:1323.55px;top:234px;letter-spacing:-0.07px;">Unallocated</span>
<span class="t g" style="left:1398.55px;top:234px;letter-spacing:-0.07px;">Unallocated</span>
<span class="t g" style="left:1474.26px;top:234px;letter-spacing:-0.07px;">unknown</span>
<span class="t g" style="left:1540.2px;top:234px;letter-spacing:0px;">/img_find_me/part01</span>
<span class="t g" style="left:1659.3px;top:234px;letter-spacing:-0.02px;">b6cc85544</span>
<div class="a" style="left:524px;top:274px;width:1188px;height:1px;background:#ededed"></div>
<svg style="left:537px;top:255px" width="13" height="16" viewBox="0 0 13 16"><path d="M.4 .4h8l3.600 3.600V15.500H.4z" fill="url(#gd)" stroke="#dcdcdc" stroke-width=".7"/><path d="M8.400 .4v3.600H12" fill="#f1f1f1" stroke="#d6d6d6" stroke-width=".6"/><path d="M.2 15.400H12.200" stroke="#b9b9b9" stroke-width=".9"/><path d="M.3 6.900L7.400 14.600M6.800 6.600L2 15.500" stroke="#fb0007" stroke-width="1.700" fill="none"/></svg>
<span class="t " style="left:553.19px;top:256px;letter-spacing:0.4px;">part02</span>
<span class="t g" style="left:686.8px;top:256px;letter-spacing:-0.17px;">2020-04-01 21:54:12 CEST</span>
<span class="t g" style="left:836.8px;top:256px;letter-spacing:-0.17px;">2020-04-01 21:54:12 CEST</span>
<span class="t g" style="left:986.8px;top:256px;letter-spacing:-0.17px;">2020-04-01 21:54:12 CEST</span>
<span class="t g" style="left:1135.93px;top:256px;letter-spacing:0.07px;">0000-00-00 00:00:00</span>
<span class="t g" style="left:1258.78px;top:256px;letter-spacing:-0.15px;">2</span>
<span class="t g" style="left:1323.55px;top:256px;letter-spacing:-0.07px;">Unallocated</span>
<span class="t g" style="left:1398.55px;top:256px;letter-spacing:-0.07px;">Unallocated</span>
<span class="t g" style="left:1474.26px;top:256px;letter-spacing:-0.07px;">unknown</span>
<span class="t g" style="left:1540.59px;top:256px;letter-spacing:0px;">/img_find_me/part02</span>
<span class="t g" style="left:1659.3px;top:256px;letter-spacing:-0.02px;">2e9413b56</span>
<div class="a" style="left:524px;top:296px;width:1188px;height:1px;background:#ededed"></div>
<svg style="left:537px;top:277px" width="13" height="16" viewBox="0 0 13 16"><path d="M.4 .4h8l3.600 3.600V15.500H.4z" fill="url(#gd)" stroke="#dcdcdc" stroke-width=".7"/><path d="M8.400 .4v3.600H12" fill="#f1f1f1" stroke="#d6d6d6" stroke-width=".6"/><path d="M.2 15.400H12.200" stroke="#b9b9b9" stroke-width=".9"/><path d="M.3 6.900L7.400 14.600M6.800 6.600L2 15.500" stroke="#fb0007" stroke-width="1.700" fill="none"/></svg>
<span class="t " style="left:553.21px;top:278px;letter-spacing:0.28px;">part03</span>
<span class="t g" style="left:686.8px;top:278px;letter-spacing:-0.17px;">2020-04-01 21:54:12 CEST</span>
<span class="t g" style="left:836.8px;top:278px;letter-spacing:-0.17px;">2020-04-01 21:54:12 CEST</span>
<span class="t g" style="left:986.8px;top:278px;letter-spacing:-0.17px;">2020-04-01 21:54:12 CEST</span>
<span class="t g" style="left:1135.93px;top:278px;letter-spacing:0.07px;">0000-00-00 00:00:00</span>
<span class="t g" style="left:1258.78px;top:278px;letter-spacing:-0.15px;">2</span>
<span class="t g" style="left:1323.55px;top:278px;letter-spacing:-0.07px;">Unallocated</span>
<span class="t g" style="left:1398.55px;top:278px;letter-spacing:-0.07px;">Unallocated</span>
<span class="t g" style="left:1474.26px;top:278px;letter-spacing:-0.07px;">unknown</span>
<span class="t g" style="left:1540.21px;top:278px;letter-spacing:0.01px;">/img_find_me/part03</span>
<span class="t g" style="left:1659.3px;top:278px;letter-spacing:-0.02px;">9e854e586</span>
<div class="a" style="left:524px;top:318px;width:1188px;height:1px;background:#ededed"></div>
<svg style="left:537px;top:299px" width="13" height="16" viewBox="0 0 13 16"><path d="M.4 .4h8l3.600 3.600V15.500H.4z" fill="url(#gd)" stroke="#dcdcdc" stroke-width=".7"/><path d="M8.400 .4v3.600H12" fill="#f1f1f1" stroke="#d6d6d6" stroke-width=".6"/><path d="M.2 15.400H12.200" stroke="#b9b9b9" stroke-width=".9"/><path d="M.3 6.900L7.400 14.600M6.800 6.600L2 15.500" stroke="#fb0007" stroke-width="1.700" fill="none"/></svg>
<span class="t " style="left:553.01px;top:300px;letter-spacing:0.34px;">part04</span>
<span class="t g" style="left:686.8px;top:300px;letter-spacing:-0.17px;">2020-04-01 21:54:12 CEST</span>
<span class="t g" style="left:836.8px;top:300px;letter-spacing:-0.17px;">2020-04-01 21:54:12 CEST</span>
<span class="t g" style="left:986.8px;top:300px;letter-spacing:-0.17px;">2020-04-01 21:54:12 CEST</span>
<span class="t g" style="left:1135.93px;top:300px;letter-spacing:0.07px;">0000-00-00 00:00:00</span>
<span class="t g" style="left:1258.78px;top:300px;letter-spacing:-0.15px;">2</span>
<span class="t g" style="left:1323.55px;top:300px;letter-spacing:-0.07px;">Unallocated</span>
<span class="t g" style="left:1398.55px;top:300px;letter-spacing:-0.07px;">Unallocated</span>
<span class="t g" style="left:1474.26px;top:300px;letter-spacing:-0.07px;">unknown</span>
<span class="t g" style="left:1540.7px;top:300px;letter-spacing:0px;">/img_find_me/part04</span>
<span class="t g" style="left:1659.3px;top:300px;letter-spacing:-0.02px;">f851f55ba1</span>
<div class="a" style="left:524px;top:340px;width:1188px;height:1px;background:#ededed"></div>
<svg style="left:537px;top:321px" width="13" height="16" viewBox="0 0 13 16"><path d="M.4 .4h8l3.600 3.600V15.500H.4z" fill="url(#gd)" stroke="#dcdcdc" stroke-width=".7"/><path d="M8.400 .4v3.600H12" fill="#f1f1f1" stroke="#d6d6d6" stroke-width=".6"/><path d="M.2 15.400H12.200" stroke="#b9b9b9" stroke-width=".9"/><path d="M.3 6.900L7.400 14.600M6.800 6.600L2 15.500" stroke="#fb0007" stroke-width="1.700" fill="none"/></svg>
<span class="t " style="left:553.22px;top:322px;letter-spacing:0.34px;">part05</span>
<span class="t g" style="left:686.8px;top:322px;letter-spacing:-0.17px;">2020-04-01 21:54:12 CEST</span>
<span class="t g" style="left:836.8px;top:322px;letter-spacing:-0.17px;">2020-04-01 21:54:12 CEST</span>
<span class="t g" style="left:986.8px;top:322px;letter-spacing:-0.17px;">2020-04-01 21:54:12 CEST</span>
<span class="t g" style="left:1135.93px;top:322px;letter-spacing:0.07px;">0000-00-00 00:00:00</span>
<span class="t g" style="left:1258.78px;top:322px;letter-spacing:-0.15px;">2</span>
<span class="t g" style="left:1323.55px;top:322px;letter-spacing:-0.07px;">Unallocated</span>
<span class="t g" style="left:1398.55px;top:322px;letter-spacing:-0.07px;">Unallocated</span>
<span class="t g" style="left:1474.26px;top:322px;letter-spacing:-0.07px;">unknown</span>
<span class="t g" style="left:1540.71px;top:322px;letter-spacing:0.01px;">/img_find_me/part05</span>
<span class="t g" style="left:1659.3px;top:322px;letter-spacing:-0.02px;">03f820a3f7</span>
<div class="a" style="left:524px;top:362px;width:1188px;height:1px;background:#ededed"></div>
<svg style="left:537px;top:343px" width="13" height="16" viewBox="0 0 13 16"><path d="M.4 .4h8l3.600 3.600V15.500H.4z" fill="url(#gd)" stroke="#dcdcdc" stroke-width=".7"/><path d="M8.400 .4v3.600H12" fill="#f1f1f1" stroke="#d6d6d6" stroke-width=".6"/><path d="M.2 15.400H12.200" stroke="#b9b9b9" stroke-width=".9"/><path d="M.3 6.900L7.400 14.600M6.800 6.600L2 15.500" stroke="#fb0007" stroke-width="1.700" fill="none"/></svg>
<span class="t " style="left:553.22px;top:344px;letter-spacing:0.32px;">part06</span>
<span class="t g" style="left:686.8px;top:344px;letter-spacing:-0.17px;">2020-04-01 21:54:12 CEST</span>
<span class="t g" style="left:836.8px;top:344px;letter-spacing:-0.17px;">2020-04-01 21:54:12 CEST</span>
<span class="t g" style="left:986.8px;top:344px;letter-spacing:-0.17px;">2020-04-01 21:54:12 CEST</span>
<span class="t g" style="left:1135.93px;top:344px;letter-spacing:0.07px;">0000-00-00 00:00:00</span>
<span class="t g" style="left:1258.78px;top:344px;letter-spacing:-0.15px;">2</span>
<span class="t g" style="left:1323.55px;top:344px;letter-spacing:-0.07px;">Unallocated</span>
<span class="t g" style="left:1398.55px;top:344px;letter-spacing:-0.07px;">Unallocated</span>
<span class="t g" style="left:1474.26px;top:344px;letter-spacing:-0.07px;">unknown</span>
<span class="t g" style="left:1540.58px;top:344px;letter-spacing:-0.01px;">/img_find_me/part06</span>
<span class="t g" style="left:1659.3px;top:344px;letter-spacing:-0.02px;">be7fa2725</span>
<div class="a" style="left:524px;top:384px;width:1188px;height:1px;background:#ededed"></div>
<svg style="left:537px;top:365px" width="13" height="16" viewBox="0 0 13 16"><path d="M.4 .4h8l3.600 3.600V15.500H.4z" fill="url(#gd)" stroke="#dcdcdc" stroke-width=".7"/><path d="M8.400 .4v3.600H12" fill="#f1f1f1" stroke="#d6d6d6" stroke-width=".6"/><path d="M.2 15.400H12.200" stroke="#b9b9b9" stroke-width=".9"/><path d="M.3 6.900L7.400 14.600M6.800 6.600L2 15.500" stroke="#fb0007" stroke-width="1.700" fill="none"/></svg>
<span class="t " style="left:553.21px;top:366px;letter-spacing:0.31px;">part07</span>
<span class="t g" style="left:686.8px;top:366px;letter-spacing:-0.17px;">2020-04-01 21:54:12 CEST</span>
<span class="t g" style="left:836.8px;top:366px;letter-spacing:-0.17px;">2020-04-01 21:54:12 CEST</span>
<span class="t g" style="left:986.8px;top:366px;letter-spacing:-0.17px;">2020-04-01 21:54:12 CEST</span>
<span class="t g" style="left:1135.93px;top:366px;letter-spacing:0.07px;">0000-00-00 00:00:00</span>
<span class="t g" style="left:1258.78px;top:366px;letter-spacing:-0.15px;">2</span>
<span class="t g" style="left:1323.55px;top:366px;letter-spacing:-0.07px;">Unallocated</span>
<span class="t g" style="left:1398.55px;top:366px;letter-spacing:-0.07px;">Unallocated</span>
<span class="t g" style="left:1474.26px;top:366px;letter-spacing:-0.07px;">unknown</span>
<span class="t g" style="left:1540.58px;top:366px;letter-spacing:-0.03px;">/img_find_me/part07</span>
<span class="t g" style="left:1659.3px;top:366px;letter-spacing:-0.02px;">1d28c8bb2</span>
<div class="a" style="left:524px;top:406px;width:1188px;height:1px;background:#ededed"></div>
<svg style="left:537px;top:387px" width="13" height="16" viewBox="0 0 13 16"><path d="M.4 .4h8l3.600 3.600V15.500H.4z" fill="url(#gd)" stroke="#dcdcdc" stroke-width=".7"/><path d="M8.400 .4v3.600H12" fill="#f1f1f1" stroke="#d6d6d6" stroke-width=".6"/><path d="M.2 15.400H12.200" stroke="#b9b9b9" stroke-width=".9"/><path d="M.3 6.900L7.400 14.600M6.800 6.600L2 15.500" stroke="#fb0007" stroke-width="1.700" fill="none"/></svg>
<span class="t " style="left:553.22px;top:388px;letter-spacing:0.32px;">part08</span>
<span class="t g" style="left:686.8px;top:388px;letter-spacing:-0.17px;">2020-04-01 21:54:12 CEST</span>
<span class="t g" style="left:836.8px;top:388px;letter-spacing:-0.17px;">2020-04-01 21:54:12 CEST</span>
<span class="t g" style="left:986.8px;top:388px;letter-spacing:-0.17px;">2020-04-01 21:54:12 CEST</span>
<span class="t g" style="left:1135.93px;top:388px;letter-spacing:0.07px;">0000-00-00 00:00:00</span>
<span class="t g" style="left:1258.78px;top:388px;letter-spacing:-0.15px;">2</span>
<span class="t g" style="left:1323.55px;top:388px;letter-spacing:-0.07px;">Unallocated</span>
<span class="t g" style="left:1398.55px;top:388px;letter-spacing:-0.07px;">Unallocated</span>
<span class="t g" style="left:1474.26px;top:388px;letter-spacing:-0.07px;">unknown</span>
<span class="t g" style="left:1540.58px;top:388px;letter-spacing:-0.01px;">/img_find_me/part08</span>
<span class="t g" style="left:1659.3px;top:388px;letter-spacing:-0.02px;">41d8ffef9b</span>
<div class="a" style="left:524px;top:428px;width:1188px;height:1px;background:#ededed"></div>
<svg style="left:537px;top:409px" width="13" height="16" viewBox="0 0 13 16"><path d="M.4 .4h8l3.600 3.600V15.500H.4z" fill="url(#gd)" stroke="#dcdcdc" stroke-width=".7"/><path d="M8.400 .4v3.600H12" fill="#f1f1f1" stroke="#d6d6d6" stroke-width=".6"/><path d="M.2 15.400H12.200" stroke="#b9b9b9" stroke-width=".9"/><path d="M.3 6.900L7.400 14.600M6.800 6.600L2 15.500" stroke="#fb0007" stroke-width="1.700" fill="none"/></svg>
<span class="t " style="left:553.21px;top:410px;letter-spacing:0.31px;">part09</span>
<span class="t g" style="left:686.8px;top:410px;letter-spacing:-0.17px;">2020-04-01 21:54:12 CEST</span>
<span class="t g" style="left:836.8px;top:410px;letter-spacing:-0.17px;">2020-04-01 21:54:12 CEST</span>
<span class="t g" style="left:986.8px;top:410px;letter-spacing:-0.17px;">2020-04-01 21:54:12 CEST</span>
<span class="t g" style="left:1135.93px;top:410px;letter-spacing:0.07px;">0000-00-00 00:00:00</span>
<span class="t g" style="left:1258.78px;top:410px;letter-spacing:-0.15px;">2</span>
<span class="t g" style="left:1323.55px;top:410px;letter-spacing:-0.07px;">Unallocated</span>
<span class="t g" style="left:1398.55px;top:410px;letter-spacing:-0.07px;">Unallocated</span>
<span class="t g" style="left:1474.26px;top:410px;letter-spacing:-0.07px;">unknown</span>
<span class="t g" style="left:1540.58px;top:410px;letter-spacing:-0.01px;">/img_find_me/part09</span>
<span class="t g" style="left:1659.3px;top:410px;letter-spacing:-0.02px;">73bb4387b</span>
<div class="a" style="left:524px;top:450px;width:1188px;height:1px;background:#ededed"></div>
<svg style="left:537px;top:431px" width="13" height="16" viewBox="0 0 13 16"><path d="M.4 .4h8l3.600 3.600V15.500H.4z" fill="url(#gd)" stroke="#dcdcdc" stroke-width=".7"/><path d="M8.400 .4v3.600H12" fill="#f1f1f1" stroke="#d6d6d6" stroke-width=".6"/><path d="M.2 15.400H12.200" stroke="#b9b9b9" stroke-width=".9"/><path d="M.3 6.900L7.400 14.600M6.800 6.600L2 15.500" stroke="#fb0007" stroke-width="1.700" fill="none"/></svg>
<span class="t " style="left:553.24px;top:432px;letter-spacing:0.25px;">part0a</span>
<span class="t g" style="left:686.8px;top:432px;letter-spacing:-0.17px;">2020-04-01 21:54:12 CEST</span>
<span class="t g" style="left:836.8px;top:432px;letter-spacing:-0.17px;">2020-04-01 21:54:12 CEST</span>
<span class="t g" style="left:986.8px;top:432px;letter-spacing:-0.17px;">2020-04-01 21:54:12 CEST</span>
<span class="t g" style="left:1135.93px;top:432px;letter-spacing:0.07px;">0000-00-00 00:00:00</span>
<span class="t g" style="left:1258.78px;top:432px;letter-spacing:-0.15px;">2</span>
<span class="t g" style="left:1323.55px;top:432px;letter-spacing:-0.07px;">Unallocated</span>
<span class="t g" style="left:1398.55px;top:432px;letter-spacing:-0.07px;">Unallocated</span>
<span class="t g" style="left:1474.26px;top:432px;letter-spacing:-0.07px;">unknown</span>
<span class="t g" style="left:1540.19px;top:432px;letter-spacing:0px;">/img_find_me/part0a</span>
<span class="t g" style="left:1659.3px;top:432px;letter-spacing:-0.02px;">17540aef7</span>
<div class="a" style="left:524px;top:472px;width:1188px;height:1px;background:#ededed"></div>
<svg style="left:537px;top:453px" width="13" height="16" viewBox="0 0 13 16"><path d="M.4 .4h8l3.600 3.600V15.500H.4z" fill="url(#gd)" stroke="#dcdcdc" stroke-width=".7"/><path d="M8.400 .4v3.600H12" fill="#f1f1f1" stroke="#d6d6d6" stroke-width=".6"/><path d="M.2 15.400H12.200" stroke="#b9b9b9" stroke-width=".9"/><path d="M.3 6.900L7.400 14.600M6.800 6.600L2 15.500" stroke="#fb0007" stroke-width="1.700" fill="none"/></svg>
<span class="t " style="left:553.22px;top:454px;letter-spacing:0.35px;">part0b</span>
<span class="t g" style="left:686.8px;top:454px;letter-spacing:-0.17px;">2020-04-01 21:54:12 CEST</span>
<span class="t g" style="left:836.8px;top:454px;letter-spacing:-0.17px;">2020-04-01 21:54:12 CEST</span>
<span class="t g" style="left:986.8px;top:454px;letter-spacing:-0.17px;">2020-04-01 21:54:12 CEST</span>
<span class="t g" style="left:1135.93px;top:454px;letter-spacing:0.07px;">0000-00-00 00:00:00</span>
<span class="t g" style="left:1258.78px;top:454px;letter-spacing:-0.15px;">2</span>
<span class="t g" style="left:1323.55px;top:454px;letter-spacing:-0.07px;">Unallocated</span>
<span class="t g" style="left:1398.55px;top:454px;letter-spacing:-0.07px;">Unallocated</span>
<span class="t g" style="left:1474.26px;top:454px;letter-spacing:-0.07px;">unknown</span>
<span class="t g" style="left:1540.58px;top:454px;letter-spacing:-0.02px;">/img_find_me/part0b</span>
<span class="t g" style="left:1659.3px;top:454px;letter-spacing:-0.02px;">7d0665438</span>
<div class="a" style="left:524px;top:494px;width:1188px;height:1px;background:#ededed"></div>
<svg style="left:537px;top:475px" width="13" height="16" viewBox="0 0 13 16"><path d="M.4 .4h8l3.600 3.600V15.500H.4z" fill="url(#gd)" stroke="#dcdcdc" stroke-width=".7"/><path d="M8.400 .4v3.600H12" fill="#f1f1f1" stroke="#d6d6d6" stroke-width=".6"/><path d="M.2 15.400H12.200" stroke="#b9b9b9" stroke-width=".9"/><path d="M.3 6.900L7.400 14.600M6.800 6.600L2 15.500" stroke="#fb0007" stroke-width="1.700" fill="none"/></svg>
<span class="t " style="left:553.07px;top:476px;letter-spacing:0.46px;">part0c</span>
<span class="t g" style="left:686.8px;top:476px;letter-spacing:-0.17px;">2020-04-01 21:54:12 CEST</span>
<span class="t g" style="left:836.8px;top:476px;letter-spacing:-0.17px;">2020-04-01 21:54:12 CEST</span>
<span class="t g" style="left:986.8px;top:476px;letter-spacing:-0.17px;">2020-04-01 21:54:12 CEST</span>
<span class="t g" style="left:1135.93px;top:476px;letter-spacing:0.07px;">0000-00-00 00:00:00</span>
<span class="t g" style="left:1258.78px;top:476px;letter-spacing:-0.15px;">2</span>
<span class="t g" style="left:1323.55px;top:476px;letter-spacing:-0.07px;">Unallocated</span>
<span class="t g" style="left:1398.55px;top:476px;letter-spacing:-0.07px;">Unallocated</span>
<span class="t g" style="left:1474.26px;top:476px;letter-spacing:-0.07px;">unknown</span>
<span class="t g" style="left:1540.19px;top:476px;letter-spacing:0.05px;">/img_find_me/part0c</span>
<span class="t g" style="left:1659.3px;top:476px;letter-spacing:-0.02px;">785c3ae5b</span>
<div class="a" style="left:524px;top:516px;width:1188px;height:1px;background:#ededed"></div>
<svg style="left:537px;top:497px" width="13" height="16" viewBox="0 0 13 16"><path d="M.4 .4h8l3.600 3.600V15.500H.4z" fill="url(#gd)" stroke="#dcdcdc" stroke-width=".7"/><path d="M8.400 .4v3.600H12" fill="#f1f1f1" stroke="#d6d6d6" stroke-width=".6"/><path d="M.2 15.400H12.200" stroke="#b9b9b9" stroke-width=".9"/><path d="M.3 6.900L7.400 14.600M6.800 6.600L2 15.500" stroke="#fb0007" stroke-width="1.700" fill="none"/></svg>
<span class="t " style="left:553.2px;top:498px;letter-spacing:0.34px;">part0d</span>
<span class="t g" style="left:686.8px;top:498px;letter-spacing:-0.17px;">2020-04-01 21:54:12 CEST</span>
<span class="t g" style="left:836.8px;top:498px;letter-spacing:-0.17px;">2020-04-01 21:54:12 CEST</span>
<span class="t g" style="left:986.8px;top:498px;letter-spacing:-0.17px;">2020-04-01 21:54:12 CEST</span>
<span class="t g" style="left:1135.93px;top:498px;letter-spacing:0.07px;">0000-00-00 00:00:00</span>
<span class="t g" style="left:1258.78px;top:498px;letter-spacing:-0.15px;">2</span>
<span class="t g" style="left:1323.55px;top:498px;letter-spacing:-0.07px;">Unallocated</span>
<span class="t g" style="left:1398.55px;top:498px;letter-spacing:-0.07px;">Unallocated</span>
<span class="t g" style="left:1474.26px;top:498px;letter-spacing:-0.07px;">unknown</span>
<span class="t g" style="left:1540.6px;top:498px;letter-spacing:0px;">/img_find_me/part0d</span>
<span class="t g" style="left:1659.3px;top:498px;letter-spacing:-0.02px;">18bd9197c</span>
<div class="a" style="left:524px;top:538px;width:1188px;height:1px;background:#ededed"></div>
<svg style="left:537px;top:519px" width="13" height="16" viewBox="0 0 13 16"><path d="M.4 .4h8l3.600 3.600V15.500H.4z" fill="url(#gd)" stroke="#dcdcdc" stroke-width=".7"/><path d="M8.400 .4v3.600H12" fill="#f1f1f1" stroke="#d6d6d6" stroke-width=".6"/><path d="M.2 15.400H12.200" stroke="#b9b9b9" stroke-width=".9"/><path d="M.3 6.900L7.400 14.600M6.800 6.600L2 15.500" stroke="#fb0007" stroke-width="1.700" fill="none"/></svg>
<span class="t " style="left:553.2px;top:520px;letter-spacing:0.28px;">part0e</span>
<span class="t g" style="left:686.8px;top:520px;letter-spacing:-0.17px;">2020-04-01 21:54:12 CEST</span>
<span class="t g" style="left:836.8px;top:520px;letter-spacing:-0.17px;">2020-04-01 21:54:12 CEST</span>
<span class="t g" style="left:986.8px;top:520px;letter-spacing:-0.17px;">2020-04-01 21:54:12 CEST</span>
<span class="t g" style="left:1135.93px;top:520px;letter-spacing:0.07px;">0000-00-00 00:00:00</span>
<span class="t g" style="left:1258.78px;top:520px;letter-spacing:-0.15px;">2</span>
<span class="t g" style="left:1323.55px;top:520px;letter-spacing:-0.07px;">Unallocated</span>
<span class="t g" style="left:1398.55px;top:520px;letter-spacing:-0.07px;">Unallocated</span>
<span class="t g" style="left:1474.26px;top:520px;letter-spacing:-0.07px;">unknown</span>
<span class="t g" style="left:1540.59px;top:520px;letter-spacing:-0.01px;">/img_find_me/part0e</span>
<span class="t g" style="left:1659.3px;top:520px;letter-spacing:-0.02px;">6e8016a9f</span>
<div class="a" style="left:524px;top:560px;width:1188px;height:1px;background:#ededed"></div>
<svg style="left:537px;top:541px" width="13" height="16" viewBox="0 0 13 16"><path d="M.4 .4h8l3.600 3.600V15.500H.4z" fill="url(#gd)" stroke="#dcdcdc" stroke-width=".7"/><path d="M8.400 .4v3.600H12" fill="#f1f1f1" stroke="#d6d6d6" stroke-width=".6"/><path d="M.2 15.400H12.200" stroke="#b9b9b9" stroke-width=".9"/><path d="M.3 6.900L7.400 14.600M6.800 6.600L2 15.500" stroke="#fb0007" stroke-width="1.700" fill="none"/></svg>
<span class="t " style="left:553.2px;top:542px;letter-spacing:0.25px;">part0f</span>
<span class="t g" style="left:686.8px;top:542px;letter-spacing:-0.17px;">2020-04-01 21:54:12 CEST</span>
<span class="t g" style="left:836.8px;top:542px;letter-spacing:-0.17px;">2020-04-01 21:54:12 CEST</span>
<span class="t g" style="left:986.8px;top:542px;letter-spacing:-0.17px;">2020-04-01 21:54:12 CEST</span>
<span class="t g" style="left:1135.93px;top:542px;letter-spacing:0.07px;">0000-00-00 00:00:00</span>
<span class="t g" style="left:1258.78px;top:542px;letter-spacing:-0.15px;">2</span>
<span class="t g" style="left:1323.55px;top:542px;letter-spacing:-0.07px;">Unallocated</span>
<span class="t g" style="left:1398.55px;top:542px;letter-spacing:-0.07px;">Unallocated</span>
<span class="t g" style="left:1474.26px;top:542px;letter-spacing:-0.07px;">unknown</span>
<span class="t g" style="left:1540.21px;top:542px;letter-spacing:-0.04px;">/img_find_me/part0f</span>
<span class="t g" style="left:1659.3px;top:542px;letter-spacing:-0.02px;">f9308c5d05</span>
<div class="a" style="left:524px;top:582px;width:1188px;height:1px;background:#ededed"></div>
<svg style="left:537px;top:563px" width="13" height="16" viewBox="0 0 13 16"><path d="M.4 .4h8l3.600 3.600V15.500H.4z" fill="url(#gd)" stroke="#dcdcdc" stroke-width=".7"/><path d="M8.400 .4v3.600H12" fill="#f1f1f1" stroke="#d6d6d6" stroke-width=".6"/><path d="M.2 15.400H12.200" stroke="#b9b9b9" stroke-width=".9"/><path d="M.3 6.900L7.400 14.600M6.800 6.600L2 15.500" stroke="#fb0007" stroke-width="1.700" fill="none"/></svg>
<span class="t " style="left:553.19px;top:564px;letter-spacing:0.28px;">part10</span>
<span class="t g" style="left:686.8px;top:564px;letter-spacing:-0.17px;">2020-04-01 21:54:12 CEST</span>
<span class="t g" style="left:836.8px;top:564px;letter-spacing:-0.17px;">2020-04-01 21:54:12 CEST</span>
<span class="t g" style="left:986.8px;top:564px;letter-spacing:-0.17px;">2020-04-01 21:54:12 CEST</span>
<span class="t g" style="left:1135.93px;top:564px;letter-spacing:0.07px;">0000-00-00 00:00:00</span>
<span class="t g" style="left:1258.78px;top:564px;letter-spacing:-0.15px;">2</span>
<span class="t g" style="left:1323.55px;top:564px;letter-spacing:-0.07px;">Unallocated</span>
<span class="t g" style="left:1398.55px;top:564px;letter-spacing:-0.07px;">Unallocated</span>
<span class="t g" style="left:1474.26px;top:564px;letter-spacing:-0.07px;">unknown</span>
<span class="t g" style="left:1540.22px;top:564px;letter-spacing:0px;">/img_find_me/part10</span>
<span class="t g" style="left:1659.3px;top:564px;letter-spacing:-0.02px;">ec947a7cc9</span>
<div class="a" style="left:524px;top:604px;width:1188px;height:1px;background:#ededed"></div>
<svg style="left:537px;top:585px" width="13" height="16" viewBox="0 0 13 16"><path d="M.4 .4h8l3.600 3.600V15.500H.4z" fill="url(#gd)" stroke="#dcdcdc" stroke-width=".7"/><path d="M8.400 .4v3.600H12" fill="#f1f1f1" stroke="#d6d6d6" stroke-width=".6"/><path d="M.2 15.400H12.200" stroke="#b9b9b9" stroke-width=".9"/><path d="M.3 6.900L7.400 14.600M6.800 6.600L2 15.500" stroke="#fb0007" stroke-width="1.700" fill="none"/></svg>
<span class="t " style="left:553.22px;top:586px;letter-spacing:0.54px;">part11</span>
<span class="t g" style="left:686.8px;top:586px;letter-spacing:-0.17px;">2020-04-01 21:54:12 CEST</span>
<span class="t g" style="left:836.8px;top:586px;letter-spacing:-0.17px;">2020-04-01 21:54:12 CEST</span>
<span class="t g" style="left:986.8px;top:586px;letter-spacing:-0.17px;">2020-04-01 21:54:12 CEST</span>
<span class="t g" style="left:1135.93px;top:586px;letter-spacing:0.07px;">0000-00-00 00:00:00</span>
<span class="t g" style="left:1258.78px;top:586px;letter-spacing:-0.15px;">2</span>
<span class="t g" style="left:1323.55px;top:586px;letter-spacing:-0.07px;">Unallocated</span>
<span class="t g" style="left:1398.55px;top:586px;letter-spacing:-0.07px;">Unallocated</span>
<span class="t g" style="left:1474.26px;top:586px;letter-spacing:-0.07px;">unknown</span>
<span class="t g" style="left:1540.81px;top:586px;letter-spacing:0.06px;">/img_find_me/part11</span>
<span class="t g" style="left:1659.3px;top:586px;letter-spacing:-0.02px;">c9317245a</span>
<div class="a" style="left:524px;top:626px;width:1188px;height:1px;background:#ededed"></div>
<svg style="left:537px;top:607px" width="13" height="16" viewBox="0 0 13 16"><path d="M.4 .4h8l3.600 3.600V15.500H.4z" fill="url(#gd)" stroke="#dcdcdc" stroke-width=".7"/><path d="M8.400 .4v3.600H12" fill="#f1f1f1" stroke="#d6d6d6" stroke-width=".6"/><path d="M.2 15.400H12.200" stroke="#b9b9b9" stroke-width=".9"/><path d="M.3 6.900L7.400 14.600M6.800 6.600L2 15.500" stroke="#fb0007" stroke-width="1.700" fill="none"/></svg>
<span class="t " style="left:553.19px;top:608px;letter-spacing:0.36px;">part12</span>
<span class="t g" style="left:686.8px;top:608px;letter-spacing:-0.17px;">2020-04-01 21:54:12 CEST</span>
<span class="t g" style="left:836.8px;top:608px;letter-spacing:-0.17px;">2020-04-01 21:54:12 CEST</span>
<span class="t g" style="left:986.8px;top:608px;letter-spacing:-0.17px;">2020-04-01 21:54:12 CEST</span>
<span class="t g" style="left:1135.93px;top:608px;letter-spacing:0.07px;">0000-00-00 00:00:00</span>
<span class="t g" style="left:1258.78px;top:608px;letter-spacing:-0.15px;">2</span>
<span class="t g" style="left:1323.55px;top:608px;letter-spacing:-0.07px;">Unallocated</span>
<span class="t g" style="left:1398.55px;top:608px;letter-spacing:-0.07px;">Unallocated</span>
<span class="t g" style="left:1474.26px;top:608px;letter-spacing:-0.07px;">unknown</span>
<span class="t g" style="left:1540.2px;top:608px;letter-spacing:-0.01px;">/img_find_me/part12</span>
<span class="t g" style="left:1659.3px;top:608px;letter-spacing:-0.02px;">65093e9a6</span>
<div class="a" style="left:524px;top:648px;width:1188px;height:1px;background:#ededed"></div>
<svg style="left:537px;top:629px" width="13" height="16" viewBox="0 0 13 16"><path d="M.4 .4h8l3.600 3.600V15.500H.4z" fill="url(#gd)" stroke="#dcdcdc" stroke-width=".7"/><path d="M8.400 .4v3.600H12" fill="#f1f1f1" stroke="#d6d6d6" stroke-width=".6"/><path d="M.2 15.400H12.200" stroke="#b9b9b9" stroke-width=".9"/><path d="M.3 6.900L7.400 14.600M6.800 6.600L2 15.500" stroke="#fb0007" stroke-width="1.700" fill="none"/></svg>
<span class="t " style="left:553.19px;top:630px;letter-spacing:0.33px;">part13</span>
<span class="t g" style="left:686.8px;top:630px;letter-spacing:-0.17px;">2020-04-01 21:54:12 CEST</span>
<span class="t g" style="left:836.8px;top:630px;letter-spacing:-0.17px;">2020-04-01 21:54:12 CEST</span>
<span class="t g" style="left:986.8px;top:630px;letter-spacing:-0.17px;">2020-04-01 21:54:12 CEST</span>
<span class="t g" style="left:1135.93px;top:630px;letter-spacing:0.07px;">0000-00-00 00:00:00</span>
<span class="t g" style="left:1258.78px;top:630px;letter-spacing:-0.15px;">2</span>
<span class="t g" style="left:1323.55px;top:630px;letter-spacing:-0.07px;">Unallocated</span>
<span class="t g" style="left:1398.55px;top:630px;letter-spacing:-0.07px;">Unallocated</span>
<span class="t g" style="left:1474.26px;top:630px;letter-spacing:-0.07px;">unknown</span>
<span class="t g" style="left:1540.21px;top:630px;letter-spacing:0.01px;">/img_find_me/part13</span>
<span class="t g" style="left:1659.3px;top:630px;letter-spacing:-0.02px;">25e29a048</span>
<div class="a" style="left:524px;top:670px;width:1188px;height:1px;background:#ededed"></div>
<svg style="left:537px;top:651px" width="13" height="16" viewBox="0 0 13 16"><path d="M.4 .4h8l3.600 3.600V15.500H.4z" fill="url(#gd)" stroke="#dcdcdc" stroke-width=".7"/><path d="M8.400 .4v3.600H12" fill="#f1f1f1" stroke="#d6d6d6" stroke-width=".6"/><path d="M.2 15.400H12.200" stroke="#b9b9b9" stroke-width=".9"/><path d="M.3 6.900L7.400 14.600M6.800 6.600L2 15.500" stroke="#fb0007" stroke-width="1.700" fill="none"/></svg>
<span class="t " style="left:553.01px;top:652px;letter-spacing:0.34px;">part14</span>
<span class="t g" style="left:686.8px;top:652px;letter-spacing:-0.17px;">2020-04-01 21:54:12 CEST</span>
<span class="t g" style="left:836.8px;top:652px;letter-spacing:-0.17px;">2020-04-01 21:54:12 CEST</span>
<span class="t g" style="left:986.8px;top:652px;letter-spacing:-0.17px;">2020-04-01 21:54:12 CEST</span>
<span class="t g" style="left:1135.93px;top:652px;letter-spacing:0.07px;">0000-00-00 00:00:00</span>
<span class="t g" style="left:1258.22px;top:652px;letter-spacing:-0.15px;">1</span>
<span class="t g" style="left:1323.55px;top:652px;letter-spacing:-0.07px;">Unallocated</span>
<span class="t g" style="left:1398.55px;top:652px;letter-spacing:-0.07px;">Unallocated</span>
<span class="t g" style="left:1474.26px;top:652px;letter-spacing:-0.07px;">unknown</span>
<span class="t g" style="left:1540.7px;top:652px;letter-spacing:0px;">/img_find_me/part14</span>
<span class="t g" style="left:1659.3px;top:652px;letter-spacing:-0.02px;">68b329da9</span>
<div class="a" style="left:638px;top:209px;width:1px;height:462px;background:#ededed"></div>
<div class="a" style="left:638px;top:209px;width:1px;height:21px;background:#fff"></div>
<div class="a" style="left:660px;top:209px;width:1px;height:462px;background:#ededed"></div>
<div class="a" style="left:660px;top:209px;width:1px;height:21px;background:#fff"></div>
<div class="a" style="left:683px;top:209px;width:1px;height:462px;background:#ededed"></div>
<div class="a" style="left:683px;top:209px;width:1px;height:21px;background:#fff"></div>
<div class="a" style="left:833px;top:209px;width:1px;height:462px;background:#ededed"></div>
<div class="a" style="left:833px;top:209px;width:1px;height:21px;background:#fff"></div>
<div class="a" style="left:983px;top:209px;width:1px;height:462px;background:#ededed"></div>
<div class="a" style="left:983px;top:209px;width:1px;height:21px;background:#fff"></div>
<div class="a" style="left:1133px;top:209px;width:1px;height:462px;background:#ededed"></div>
<div class="a" style="left:1133px;top:209px;width:1px;height:21px;background:#fff"></div>
<div class="a" style="left:1255px;top:209px;width:1px;height:462px;background:#ededed"></div>
<div class="a" style="left:1255px;top:209px;width:1px;height:21px;background:#fff"></div>
<div class="a" style="left:1321px;top:209px;width:1px;height:462px;background:#ededed"></div>
<div class="a" style="left:1321px;top:209px;width:1px;height:21px;background:#fff"></div>
<div class="a" style="left:1396px;top:209px;width:1px;height:462px;background:#ededed"></div>
<div class="a" style="left:1396px;top:209px;width:1px;height:21px;background:#fff"></div>
<div class="a" style="left:1471px;top:209px;width:1px;height:462px;background:#ededed"></div>
<div class="a" style="left:1471px;top:209px;width:1px;height:21px;background:#fff"></div>
<div class="a" style="left:1537px;top:209px;width:1px;height:462px;background:#ededed"></div>
<div class="a" style="left:1537px;top:209px;width:1px;height:21px;background:#fff"></div>
<div class="a" style="left:1656px;top:209px;width:1px;height:462px;background:#ededed"></div>
<div class="a" style="left:1656px;top:209px;width:1px;height:21px;background:#fff"></div>
<div class="a" style="left:524px;top:694px;width:1188px;height:16px;background:#f0f0f0"></div>
<div class="a" style="left:541px;top:694px;width:928px;height:16px;background:#cdcdcd"></div>
<svg style="left:529px;top:698px" width="7" height="8" viewBox="0 0 7 8"><path d="M5.500 .8L1.800 4 5.500 7.200" fill="none" stroke="#404040" stroke-width="1.700"/></svg>
<svg style="left:1700px;top:698px" width="7" height="8" viewBox="0 0 7 8"><path d="M1.500 .8L5.200 4 1.500 7.200" fill="none" stroke="#404040" stroke-width="1.700"/></svg>
<div class="a" style="left:523px;top:721px;width:1189px;height:1px;background:#828790"></div>
<div class="a" style="left:524px;top:747px;width:1187px;height:1px;background:#dcdcdc"></div>
<div class="a" style="left:524px;top:748px;width:1187px;height:1px;background:#fcfcfc"></div>
<div class="a" style="left:525px;top:729px;width:29px;height:19px;border:1px solid #dadada"></div>
<span class="t " style="left:529.3px;top:732px;letter-spacing:0.68px;">Hex</span>
<div class="a" style="left:553px;top:727px;width:36px;height:22px;background:#fff;border:1px solid #e3e3e3;border-bottom:none"></div>
<span class="t " style="left:558.99px;top:730px;letter-spacing:0.8px;">Text</span>
<div class="a" style="left:589px;top:729px;width:62px;height:19px;border:1px solid #dadada"></div>
<span class="t d" style="left:592.86px;top:732px;letter-spacing:-0.18px;">Application</span>
<div class="a" style="left:650px;top:729px;width:54px;height:19px;border:1px solid #dadada"></div>
<span class="t d" style="left:654.79px;top:732px;letter-spacing:-0.28px;">Message</span>
<div class="a" style="left:703px;top:729px;width:77px;height:19px;border:1px solid #dadada"></div>
<span class="t " style="left:708.02px;top:732px;letter-spacing:-0.02px;">File Metadata</span>
<div class="a" style="left:779px;top:729px;width:51px;height:19px;border:1px solid #dadada"></div>
<span class="t d" style="left:783.86px;top:732px;letter-spacing:0.29px;">Context</span>
<div class="a" style="left:829px;top:729px;width:47px;height:19px;border:1px solid #dadada"></div>
<span class="t d" style="left:833.58px;top:732px;letter-spacing:-0.08px;">Results</span>
<div class="a" style="left:875px;top:729px;width:70px;height:19px;border:1px solid #dadada"></div>
<span class="t " style="left:881.57px;top:732px;letter-spacing:0.04px;">Annotations</span>
<div class="a" style="left:944px;top:729px;width:102px;height:19px;border:1px solid #dadada"></div>
<span class="t " style="left:950.11px;top:732px;letter-spacing:-0.06px;">Other Occurrences</span>
<div class="a" style="left:523px;top:749px;width:1189px;height:1px;background:#828790"></div>
<div class="a" style="left:523px;top:749px;width:1px;height:123px;background:#828790"></div>
<div class="a" style="left:524px;top:750px;width:1187px;height:1px;background:#fafafa"></div>
<div class="a" style="left:524px;top:750px;width:1px;height:23px;background:#fafafa"></div>
<div class="a" style="left:708px;top:771px;width:1002px;height:1px;background:#dcdcdc"></div>
<div class="a" style="left:524px;top:772px;width:1187px;height:1px;background:#fcfcfc"></div>
<div class="a" style="left:526px;top:753px;width:43px;height:19px;border:1px solid #dadada"></div>
<div class="a" style="left:646px;top:753px;width:62px;height:19px;border:1px solid #dadada"></div>
<div class="a" style="left:568px;top:751px;width:79px;height:22px;background:#fff;border:1px solid #e3e3e3;border-bottom:none"></div>
<span class="t " style="left:530.36px;top:756px;letter-spacing:0.06px;">Strings</span>
<span class="t " style="left:574.15px;top:754px;letter-spacing:0.37px;">Indexed Text</span>
<span class="t d" style="left:650.16px;top:755px;letter-spacing:0px;">Translation</span>
<div class="a" style="left:523px;top:773px;width:1189px;height:2px;background:#828790"></div>
<div class="a" style="left:524px;top:773px;width:1px;height:99px;background:#828790"></div>
<div class="a" style="left:525px;top:773px;width:1px;height:30px;background:#828790"></div>
<div class="a" style="left:525px;top:809px;width:1px;height:63px;background:#828790"></div>
<div class="a" style="left:525px;top:803px;width:1px;height:6px;background:#fafafa"></div>
<div class="a" style="left:526px;top:775px;width:1184px;height:1px;background:#fafafa"></div>
<div class="a" style="left:526px;top:775px;width:1px;height:27px;background:#fafafa"></div>
<div class="a" style="left:1710px;top:773px;width:2px;height:99px;background:#828790"></div>
<span class="t " style="left:534.86px;top:780px;letter-spacing:-0.03px;">Matches on page:</span>
<span class="t " style="left:639px;top:780px;letter-spacing:-0.15px;">-</span>
<span class="t " style="left:658.96px;top:780px;letter-spacing:0.8px;">of</span>
<span class="t " style="left:687px;top:780px;letter-spacing:-0.15px;">-</span>
<span class="t " style="left:706.92px;top:780px;letter-spacing:0.14px;">Match</span>
<span class="t " style="left:823.65px;top:780px;letter-spacing:0.06px;">Page:</span>
<span class="t " style="left:859.02px;top:780px;letter-spacing:-0.15px;">1</span>
<span class="t " style="left:874.16px;top:780px;letter-spacing:0.8px;">of</span>
<span class="t " style="left:891.02px;top:780px;letter-spacing:-0.15px;">1</span>
<span class="t " style="left:913.65px;top:780px;letter-spacing:-0.14px;">Page</span>
<span class="t " style="left:1483.15px;top:780px;letter-spacing:0.19px;">Text Source:</span>
<div class="a" style="left:743px;top:777px;width:42px;height:20px;border:1px solid #dddddd;border-radius:3px;background:linear-gradient(#efefef,#eaeaea);box-shadow:0 1px 1px #e2e2e2"></div>
<div class="a" style="left:764px;top:778px;width:1px;height:18px;background:#dddddd"></div>
<svg style="left:746.8px;top:780px" width="12" height="13" viewBox="0 0 12 13"><path d="M5.800 1.400L1.400 6.500 5.800 11.600M2.200 6.500H10.600" fill="none" stroke="#c1c1c1" stroke-width="2.400" stroke-linecap="round" stroke-linejoin="round"/></svg>
<svg style="left:767.9px;top:780px" width="12" height="13" viewBox="0 0 12 13"><path d="M6.200 1.400L10.600 6.500 6.200 11.600M9.800 6.500H1.400" fill="none" stroke="#c1c1c1" stroke-width="2.400" stroke-linecap="round" stroke-linejoin="round"/></svg>
<div class="a" style="left:946px;top:777px;width:42px;height:20px;border:1px solid #dddddd;border-radius:3px;background:linear-gradient(#efefef,#eaeaea);box-shadow:0 1px 1px #e2e2e2"></div>
<div class="a" style="left:967px;top:778px;width:1px;height:18px;background:#dddddd"></div>
<svg style="left:949.8px;top:780px" width="12" height="13" viewBox="0 0 12 13"><path d="M5.800 1.400L1.400 6.500 5.800 11.600M2.200 6.500H10.600" fill="none" stroke="#c1c1c1" stroke-width="2.400" stroke-linecap="round" stroke-linejoin="round"/></svg>
<svg style="left:970.9px;top:780px" width="12" height="13" viewBox="0 0 12 13"><path d="M6.200 1.400L10.600 6.500 6.200 11.600M9.800 6.500H1.400" fill="none" stroke="#c1c1c1" stroke-width="2.400" stroke-linecap="round" stroke-linejoin="round"/></svg>
<div class="a" style="left:805px;top:776px;width:1px;height:24px;background:#828790"></div>
<div class="a" style="left:1009px;top:776px;width:1px;height:24px;background:#828790"></div>
<div class="a" style="left:1550px;top:775px;width:150px;height:25px;background:#e1e1e1;border:1px solid #adadad"></div>
<span class="t " style="left:1552.1px;top:780px;letter-spacing:0.28px;">File Text</span>
<svg style="left:1685.5px;top:785px" width="9" height="5" viewBox="0 0 9 5"><path d="M.5 .5L4.500 4.500 8.500 .5" fill="none" stroke="#404040" stroke-width="1.100"/></svg>
<div class="a" style="left:525px;top:802px;width:1185px;height:1px;background:#828790"></div>
<div class="a" style="left:525px;top:809px;width:1185px;height:1px;background:#828790"></div>
<div class="a" style="left:526px;top:810px;width:1184px;height:62px;background:#fff"></div>
<span class="t m" style="left:529px;top:820px;">TW</span>
<span class="t m" style="left:529px;top:847px;">------------------------------METADATA------------------------------</span>
</body></html>
